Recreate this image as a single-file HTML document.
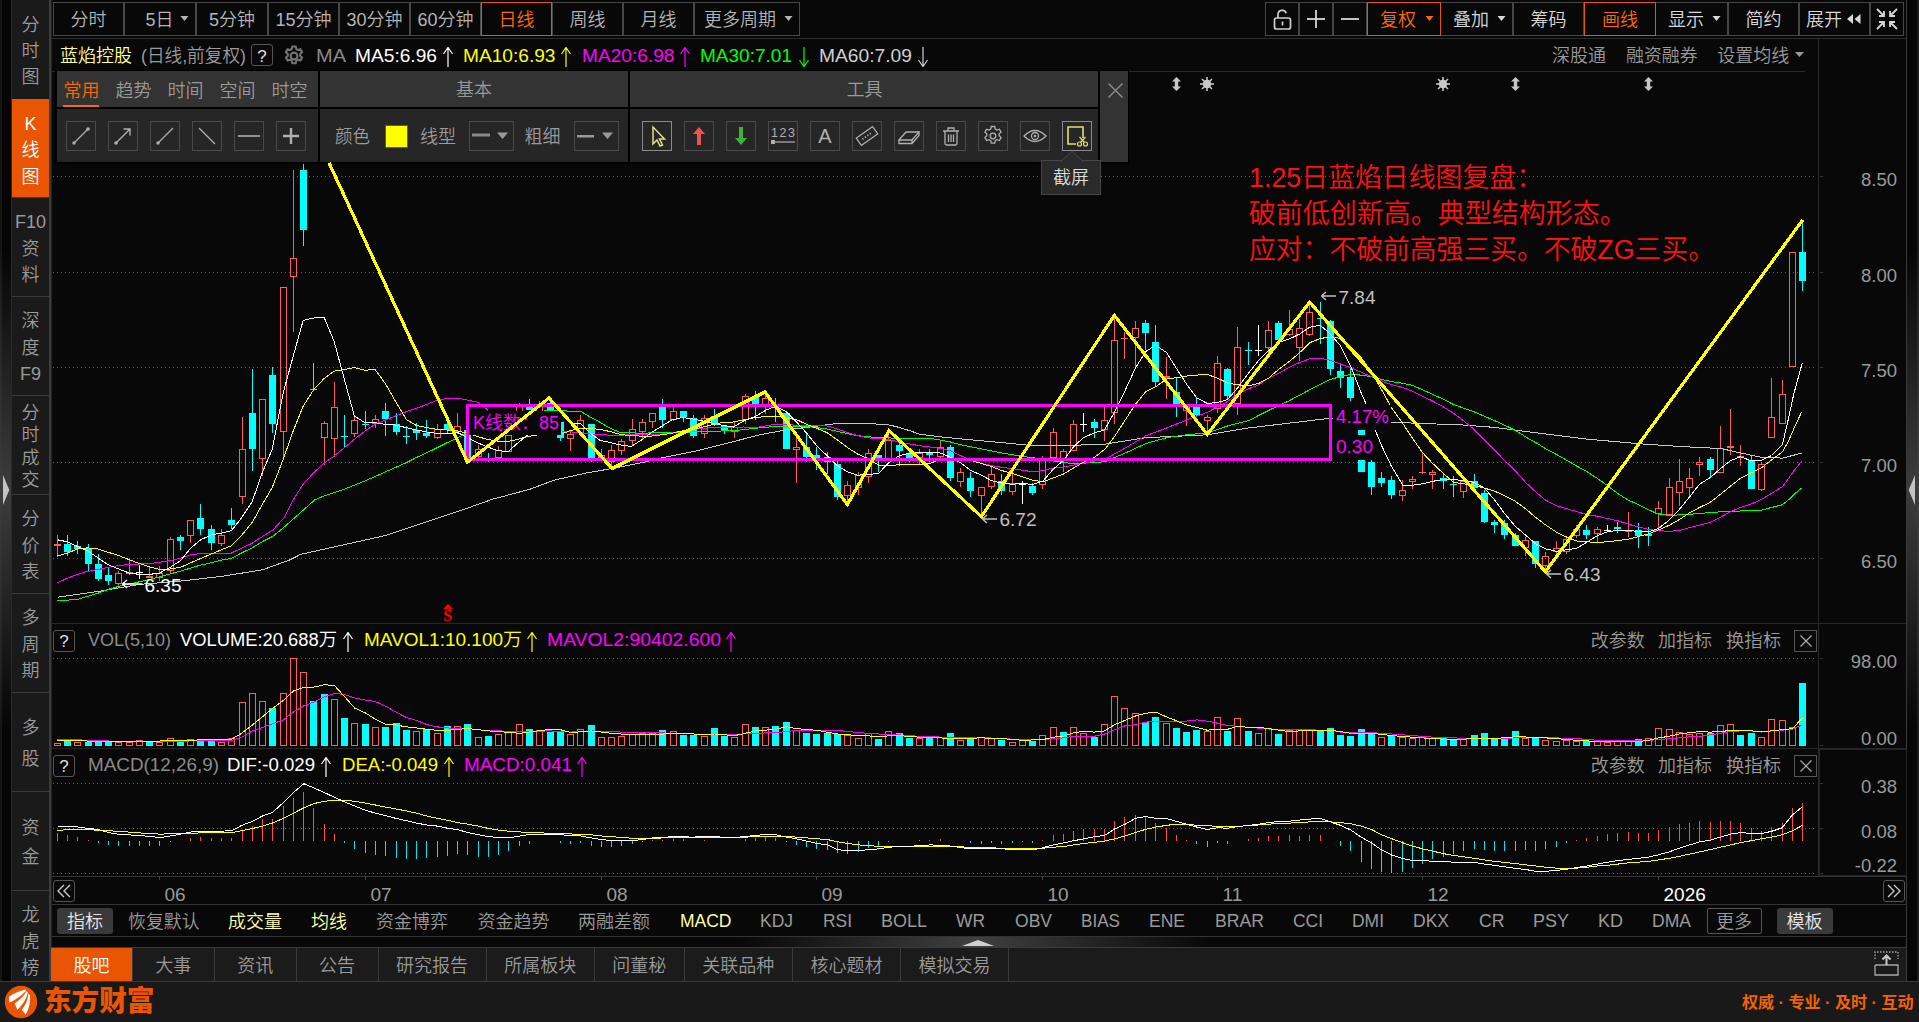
<!DOCTYPE html>
<html lang="zh-CN"><head><meta charset="utf-8"><title>K线图</title><style>html,body{margin:0;padding:0;background:#080808;}
#root{position:relative;width:1919px;height:1022px;overflow:hidden;background:#080808;font-family:"Liberation Sans","Noto Sans CJK SC",sans-serif;font-weight:350;}
.b{position:absolute;display:block;}
.t{position:absolute;white-space:nowrap;}
</style></head><body><div id="root">
<div class="b" style="left:0px;top:0px;width:12px;height:981px;background:#050505;"></div>
<div class="b" style="left:0px;top:0px;width:2px;height:981px;background:#161616;"></div>
<div class="b" style="left:0;top:250px;width:12px;height:480px;background:linear-gradient(to bottom,rgba(70,70,70,0),rgba(70,70,70,.85) 50%,rgba(70,70,70,0));"></div>
<svg class="b" style="left:3px;top:474px" width="8" height="32" viewBox="0 0 8 32"><polygon points="0,1 6.3,16 0,31" fill="#c4c4c4"/></svg>
<div class="b" style="left:12px;top:0px;width:37px;height:981px;background:#1a1a1a;"></div>
<div class="b" style="left:49px;top:0px;width:2px;height:981px;background:#3a3c3e;"></div>
<div class="b" style="left:51px;top:0px;width:1px;height:981px;background:#242424;"></div>
<div class="b" style="left:11px;top:0px;width:1px;height:981px;background:#2a2a2a;"></div>
<div class="b" style="left:12px;top:99px;width:37px;height:98px;background:#ea5504;"></div>
<div class="b" style="left:12px;top:197px;width:37px;height:1px;background:#3a3a3a;"></div>
<div class="b" style="left:12px;top:296px;width:37px;height:1px;background:#3a3a3a;"></div>
<div class="b" style="left:12px;top:395px;width:37px;height:1px;background:#3a3a3a;"></div>
<div class="b" style="left:12px;top:494px;width:37px;height:1px;background:#3a3a3a;"></div>
<div class="b" style="left:12px;top:593px;width:37px;height:1px;background:#3a3a3a;"></div>
<div class="b" style="left:12px;top:692px;width:37px;height:1px;background:#3a3a3a;"></div>
<div class="b" style="left:12px;top:791px;width:37px;height:1px;background:#3a3a3a;"></div>
<div class="b" style="left:12px;top:890px;width:37px;height:1px;background:#3a3a3a;"></div>
<div class="b" style="left:53px;top:2px;width:71px;height:34px;border:1px solid #484848;box-sizing:border-box;"></div>
<div class="b" style="left:124px;top:2px;width:72px;height:34px;border:1px solid #484848;box-sizing:border-box;"></div>
<svg class="b" style="left:179.7px;top:16px" width="9" height="6"><polygon points="0.5,0 8.5,0 4.5,5" fill="#b4b4b4"/></svg>
<div class="b" style="left:196px;top:2px;width:72px;height:34px;border:1px solid #484848;box-sizing:border-box;"></div>
<div class="b" style="left:268px;top:2px;width:71px;height:34px;border:1px solid #484848;box-sizing:border-box;"></div>
<div class="b" style="left:339px;top:2px;width:71px;height:34px;border:1px solid #484848;box-sizing:border-box;"></div>
<div class="b" style="left:410px;top:2px;width:71px;height:34px;border:1px solid #484848;box-sizing:border-box;"></div>
<div class="b" style="left:552px;top:2px;width:71px;height:34px;border:1px solid #484848;box-sizing:border-box;"></div>
<div class="b" style="left:623px;top:2px;width:71px;height:34px;border:1px solid #484848;box-sizing:border-box;"></div>
<div class="b" style="left:694px;top:2px;width:106px;height:34px;border:1px solid #484848;box-sizing:border-box;"></div>
<svg class="b" style="left:783.7px;top:16px" width="9" height="6"><polygon points="0.5,0 8.5,0 4.5,5" fill="#b4b4b4"/></svg>
<div class="b" style="left:481px;top:2px;width:71px;height:34px;border:1px solid #ea5504;box-sizing:border-box;"></div>
<div class="b" style="left:1265px;top:2px;width:34px;height:34px;border:1px solid #464646;box-sizing:border-box;"></div>
<div class="b" style="left:1299px;top:2px;width:34px;height:34px;border:1px solid #464646;box-sizing:border-box;"></div>
<div class="b" style="left:1333px;top:2px;width:34px;height:34px;border:1px solid #464646;box-sizing:border-box;"></div>
<div class="b" style="left:1440px;top:2px;width:73px;height:34px;border:1px solid #464646;box-sizing:border-box;"></div>
<svg class="b" style="left:1496.7px;top:16px" width="9" height="6"><polygon points="0.5,0 8.5,0 4.5,5" fill="#d8d8d8"/></svg>
<div class="b" style="left:1513px;top:2px;width:71px;height:34px;border:1px solid #464646;box-sizing:border-box;"></div>
<div class="b" style="left:1655px;top:2px;width:73px;height:34px;border:1px solid #464646;box-sizing:border-box;"></div>
<svg class="b" style="left:1711.7px;top:16px" width="9" height="6"><polygon points="0.5,0 8.5,0 4.5,5" fill="#d8d8d8"/></svg>
<div class="b" style="left:1728px;top:2px;width:71px;height:34px;border:1px solid #464646;box-sizing:border-box;"></div>
<div class="b" style="left:1799px;top:2px;width:71px;height:34px;border:1px solid #464646;box-sizing:border-box;"></div>
<svg class="b" style="left:1846px;top:13px" width="16" height="12"><polygon points="7,1 7,11 1,6" fill="#d8d8d8"/><polygon points="14.5,1 14.5,11 8.5,6" fill="#d8d8d8"/></svg>
<div class="b" style="left:1870px;top:2px;width:34px;height:34px;border:1px solid #464646;box-sizing:border-box;"></div>
<div class="b" style="left:1367px;top:2px;width:74px;height:34px;border:1px solid #ea5504;box-sizing:border-box;"></div>
<svg class="b" style="left:1424.7px;top:16px" width="9" height="6"><polygon points="0.5,0 8.5,0 4.5,5" fill="#ff6a00"/></svg>
<div class="b" style="left:1584px;top:2px;width:72px;height:34px;border:1px solid #ea5504;box-sizing:border-box;"></div>
<svg class="b" style="left:1270px;top:7px" width="24" height="24" viewBox="0 0 24 24" fill="none" stroke="#d0d0d0" stroke-width="1.7"><rect x="4.5" y="11" width="16" height="11" rx="2"/><path d="M8 11V7.5a4.2 4.2 0 0 1 8.2-1.2"/><line x1="12.5" y1="14.5" x2="12.5" y2="18.5"/></svg>
<svg class="b" style="left:1307px;top:10px" width="18" height="18" stroke="#d8d8d8" stroke-width="1.8"><line x1="0" y1="9" x2="18" y2="9"/><line x1="9" y1="0" x2="9" y2="18"/></svg>
<svg class="b" style="left:1341px;top:10px" width="18" height="18" stroke="#d8d8d8" stroke-width="1.8"><line x1="0" y1="9" x2="18" y2="9"/></svg>
<svg class="b" style="left:1876px;top:8px" width="22" height="22" viewBox="0 0 22 22" fill="none" stroke="#d8d8d8" stroke-width="1.8"><path d="M1 1l7 7M8 3v5H3M21 1l-7 7M14 3v5h5M1 21l7-7M8 19v-5H3M21 21l-7-7M14 19v-5h5"/></svg>
<div class="b" style="left:52px;top:38px;width:1854px;height:1px;background:#2a2a2a;"></div>
<div class="b" style="left:251px;top:44px;width:22px;height:22px;border:1px solid #555;box-sizing:border-box;border-radius:3px;"></div>
<svg class="b" style="left:282px;top:44px" width="24" height="24" viewBox="0 0 24 24" fill="none" stroke="#727272" stroke-width="2.1"><circle cx="12" cy="12" r="3.4"/><path d="M10.3 2.5h3.4l.6 2.6 1.6.9 2.5-.8 1.7 2.9-1.9 1.8v1.9l1.9 1.8-1.7 2.9-2.5-.8-1.6.9-.6 2.6h-3.4l-.6-2.6-1.6-.9-2.5.8-1.7-2.9 1.9-1.8v-1.9L3.9 8.1l1.7-2.9 2.5.8 1.6-.9z"/></svg>
<svg class="b" style="left:443px;top:46.5px" width="10" height="20" fill="none" stroke="#fff" stroke-width="1.2"><path d="M5 0V20M0.5 7L5 0.5L9.5 7"/></svg>
<svg class="b" style="left:561px;top:46.5px" width="10" height="20" fill="none" stroke="#ffff00" stroke-width="1.2"><path d="M5 0V20M0.5 7L5 0.5L9.5 7"/></svg>
<svg class="b" style="left:680px;top:46.5px" width="10" height="20" fill="none" stroke="#ff00ff" stroke-width="1.2"><path d="M5 0V20M0.5 7L5 0.5L9.5 7"/></svg>
<svg class="b" style="left:799px;top:46.5px" width="10" height="20" fill="none" stroke="#00ff00" stroke-width="1.2"><path d="M5 0V20M0.5 13L5 19.5L9.5 13"/></svg>
<svg class="b" style="left:917.7px;top:46.5px" width="10" height="20" fill="none" stroke="#d0d0d0" stroke-width="1.2"><path d="M5 0V20M0.5 13L5 19.5L9.5 13"/></svg>
<svg class="b" style="left:1795px;top:52px" width="9" height="6"><polygon points="0,0 9,0 4.5,5" fill="#999"/></svg>
<div class="b" style="left:52px;top:71px;width:1753px;height:1px;background:#2a2a2a;"></div>
<svg class="b" style="left:0;top:0" width="1919" height="1022" viewBox="0 0 1919 1022"><g stroke="#5a5a5a" stroke-width="1" stroke-dasharray="1 3" shape-rendering="crispEdges"><line x1="53" y1="176.5" x2="1815" y2="176.5"/><line x1="53" y1="272.5" x2="1815" y2="272.5"/><line x1="53" y1="367.5" x2="1815" y2="367.5"/><line x1="53" y1="462.5" x2="1815" y2="462.5"/><line x1="53" y1="558.5" x2="1815" y2="558.5"/><line x1="53" y1="658.5" x2="1815" y2="658.5"/><line x1="53" y1="783.5" x2="1815" y2="783.5"/><line x1="53" y1="828.5" x2="1815" y2="828.5"/><line x1="53" y1="873.5" x2="1815" y2="873.5"/></g>
<g fill="#333" shape-rendering="crispEdges"><rect x="1820" y="176" width="3" height="1"/><rect x="1820" y="272" width="3" height="1"/><rect x="1820" y="367" width="3" height="1"/><rect x="1820" y="462" width="3" height="1"/><rect x="1820" y="558" width="3" height="1"/><rect x="1820" y="658" width="3" height="1"/><rect x="1820" y="745" width="3" height="1"/><rect x="1820" y="783" width="3" height="1"/><rect x="1820" y="828" width="3" height="1"/><rect x="1820" y="873" width="3" height="1"/></g>
<g shape-rendering="crispEdges"><rect x="57" y="535" width="1" height="9" fill="#ff5c5c"/><rect x="57" y="546" width="1" height="11" fill="#ff5c5c"/><rect x="54.5" y="544.5" width="6" height="1" fill="none" stroke="#ff5c5c" stroke-width="1"/><rect x="67" y="535" width="1" height="21" fill="#00ffff"/><rect x="64" y="544" width="7" height="8" fill="#00ffff"/><rect x="77" y="541" width="1" height="13" fill="#00ffff"/><rect x="74" y="546" width="7" height="3" fill="#00ffff"/><rect x="88" y="544" width="1" height="27" fill="#00ffff"/><rect x="85" y="548" width="7" height="16" fill="#00ffff"/><rect x="98" y="554" width="1" height="27" fill="#00ffff"/><rect x="95" y="564" width="7" height="15" fill="#00ffff"/><rect x="108" y="568" width="1" height="17" fill="#00ffff"/><rect x="105" y="575" width="7" height="6" fill="#00ffff"/><rect x="118" y="571" width="1" height="2" fill="#ff5c5c"/><rect x="118" y="584" width="1" height="2" fill="#ff5c5c"/><rect x="115.5" y="573.5" width="6" height="10" fill="none" stroke="#ff5c5c" stroke-width="1"/><rect x="129" y="558" width="1" height="14" fill="#ff5c5c"/><rect x="129" y="574" width="1" height="1" fill="#ff5c5c"/><rect x="126.5" y="572.5" width="6" height="1" fill="none" stroke="#ff5c5c" stroke-width="1"/><rect x="139" y="565" width="1" height="14" fill="#ffffff"/><rect x="136" y="572" width="7" height="1" fill="#ffffff"/><rect x="149" y="566" width="1" height="10" fill="#ff5c5c"/><rect x="146.5" y="576.5" width="6" height="1" fill="none" stroke="#ff5c5c" stroke-width="1"/><rect x="159" y="566" width="1" height="7" fill="#ff5c5c"/><rect x="159" y="578" width="1" height="3" fill="#ff5c5c"/><rect x="156.5" y="573.5" width="6" height="4" fill="none" stroke="#ff5c5c" stroke-width="1"/><rect x="170" y="537" width="1" height="2" fill="#ff5c5c"/><rect x="170" y="571" width="1" height="2" fill="#ff5c5c"/><rect x="167.5" y="539.5" width="6" height="31" fill="none" stroke="#ff5c5c" stroke-width="1"/><rect x="180" y="535" width="1" height="15" fill="#00ffff"/><rect x="177" y="537" width="7" height="4" fill="#00ffff"/><rect x="190" y="536" width="1" height="7" fill="#ff5c5c"/><rect x="187.5" y="520.5" width="6" height="15" fill="none" stroke="#ff5c5c" stroke-width="1"/><rect x="200" y="504" width="1" height="31" fill="#00ffff"/><rect x="197" y="518" width="7" height="11" fill="#00ffff"/><rect x="211" y="525" width="1" height="25" fill="#00ffff"/><rect x="208" y="529" width="7" height="14" fill="#00ffff"/><rect x="221" y="529" width="1" height="6" fill="#ff5c5c"/><rect x="221" y="544" width="1" height="2" fill="#ff5c5c"/><rect x="218.5" y="535.5" width="6" height="8" fill="none" stroke="#ff5c5c" stroke-width="1"/><rect x="231" y="508" width="1" height="21" fill="#00ffff"/><rect x="228" y="520" width="7" height="5" fill="#00ffff"/><rect x="242" y="417" width="1" height="32" fill="#ff5c5c"/><rect x="242" y="497" width="1" height="7" fill="#ff5c5c"/><rect x="239.5" y="449.5" width="6" height="47" fill="none" stroke="#ff5c5c" stroke-width="1"/><rect x="252" y="369" width="1" height="102" fill="#00ffff"/><rect x="249" y="413" width="7" height="36" fill="#00ffff"/><rect x="262" y="459" width="1" height="17" fill="#ff5c5c"/><rect x="259.5" y="399.5" width="6" height="59" fill="none" stroke="#ff5c5c" stroke-width="1"/><rect x="272" y="367" width="1" height="66" fill="#00ffff"/><rect x="269" y="375" width="7" height="49" fill="#00ffff"/><rect x="283" y="432" width="1" height="27" fill="#ff5c5c"/><rect x="280.5" y="287.5" width="6" height="144" fill="none" stroke="#ff5c5c" stroke-width="1"/><rect x="293" y="170" width="1" height="88" fill="#ff5c5c"/><rect x="293" y="277" width="1" height="55" fill="#ff5c5c"/><rect x="290.5" y="258.5" width="6" height="18" fill="none" stroke="#ff5c5c" stroke-width="1"/><rect x="303" y="164" width="1" height="82" fill="#00ffff"/><rect x="300" y="170" width="7" height="60" fill="#00ffff"/><rect x="313" y="363" width="1" height="26" fill="#00ffff"/><rect x="310" y="389" width="7" height="1" fill="#00ffff"/><rect x="324" y="421" width="1" height="2" fill="#ff5c5c"/><rect x="324" y="438" width="1" height="27" fill="#ff5c5c"/><rect x="321.5" y="423.5" width="6" height="14" fill="none" stroke="#ff5c5c" stroke-width="1"/><rect x="334" y="382" width="1" height="25" fill="#ff5c5c"/><rect x="334" y="439" width="1" height="18" fill="#ff5c5c"/><rect x="331.5" y="407.5" width="6" height="31" fill="none" stroke="#ff5c5c" stroke-width="1"/><rect x="344" y="415" width="1" height="32" fill="#00ffff"/><rect x="341" y="436" width="7" height="1" fill="#00ffff"/><rect x="354" y="416" width="1" height="4" fill="#ff5c5c"/><rect x="354" y="434" width="1" height="3" fill="#ff5c5c"/><rect x="351.5" y="420.5" width="6" height="13" fill="none" stroke="#ff5c5c" stroke-width="1"/><rect x="365" y="411" width="1" height="18" fill="#00ffff"/><rect x="362" y="424" width="7" height="1" fill="#00ffff"/><rect x="375" y="415" width="1" height="4" fill="#ff5c5c"/><rect x="375" y="424" width="1" height="4" fill="#ff5c5c"/><rect x="372.5" y="419.5" width="6" height="4" fill="none" stroke="#ff5c5c" stroke-width="1"/><rect x="385" y="403" width="1" height="33" fill="#00ffff"/><rect x="382" y="411" width="7" height="8" fill="#00ffff"/><rect x="396" y="413" width="1" height="22" fill="#00ffff"/><rect x="393" y="424" width="7" height="8" fill="#00ffff"/><rect x="406" y="426" width="1" height="18" fill="#00ffff"/><rect x="403" y="436" width="7" height="1" fill="#00ffff"/><rect x="416" y="423" width="1" height="17" fill="#00ffff"/><rect x="413" y="430" width="7" height="3" fill="#00ffff"/><rect x="426" y="420" width="1" height="18" fill="#00ffff"/><rect x="423" y="433" width="7" height="3" fill="#00ffff"/><rect x="437" y="424" width="1" height="5" fill="#ff5c5c"/><rect x="437" y="438" width="1" height="1" fill="#ff5c5c"/><rect x="434.5" y="429.5" width="6" height="8" fill="none" stroke="#ff5c5c" stroke-width="1"/><rect x="447" y="423" width="1" height="10" fill="#00ffff"/><rect x="444" y="424" width="7" height="6" fill="#00ffff"/><rect x="457" y="413" width="1" height="13" fill="#ff5c5c"/><rect x="457" y="432" width="1" height="2" fill="#ff5c5c"/><rect x="454.5" y="426.5" width="6" height="5" fill="none" stroke="#ff5c5c" stroke-width="1"/><rect x="467" y="429" width="1" height="32" fill="#00ffff"/><rect x="464" y="430" width="7" height="28" fill="#00ffff"/><rect x="478" y="445" width="1" height="4" fill="#ff5c5c"/><rect x="478" y="457" width="1" height="1" fill="#ff5c5c"/><rect x="475.5" y="449.5" width="6" height="7" fill="none" stroke="#ff5c5c" stroke-width="1"/><rect x="488" y="453" width="1" height="9" fill="#00ffff"/><rect x="485" y="458" width="7" height="1" fill="#00ffff"/><rect x="498" y="446" width="1" height="4" fill="#ff5c5c"/><rect x="495.5" y="450.5" width="6" height="7" fill="none" stroke="#ff5c5c" stroke-width="1"/><rect x="508" y="434" width="1" height="1" fill="#ff5c5c"/><rect x="505.5" y="435.5" width="6" height="16" fill="none" stroke="#ff5c5c" stroke-width="1"/><rect x="519" y="403" width="1" height="3" fill="#ff5c5c"/><rect x="516.5" y="406.5" width="6" height="26" fill="none" stroke="#ff5c5c" stroke-width="1"/><rect x="529" y="399" width="1" height="11" fill="#00ffff"/><rect x="526" y="407" width="7" height="3" fill="#00ffff"/><rect x="539" y="401" width="1" height="4" fill="#ff5c5c"/><rect x="539" y="416" width="1" height="4" fill="#ff5c5c"/><rect x="536.5" y="405.5" width="6" height="10" fill="none" stroke="#ff5c5c" stroke-width="1"/><rect x="550" y="400" width="1" height="12" fill="#00ffff"/><rect x="547" y="403" width="7" height="7" fill="#00ffff"/><rect x="560" y="422" width="1" height="19" fill="#00ffff"/><rect x="557" y="422" width="7" height="16" fill="#00ffff"/><rect x="570" y="430" width="1" height="4" fill="#ff5c5c"/><rect x="570" y="439" width="1" height="12" fill="#ff5c5c"/><rect x="567.5" y="434.5" width="6" height="4" fill="none" stroke="#ff5c5c" stroke-width="1"/><rect x="580" y="415" width="1" height="5" fill="#ff5c5c"/><rect x="577.5" y="420.5" width="6" height="12" fill="none" stroke="#ff5c5c" stroke-width="1"/><rect x="591" y="424" width="1" height="38" fill="#00ffff"/><rect x="588" y="424" width="7" height="34" fill="#00ffff"/><rect x="601" y="449" width="1" height="6" fill="#ff5c5c"/><rect x="601" y="458" width="1" height="1" fill="#ff5c5c"/><rect x="598.5" y="455.5" width="6" height="2" fill="none" stroke="#ff5c5c" stroke-width="1"/><rect x="611" y="445" width="1" height="5" fill="#ff5c5c"/><rect x="611" y="462" width="1" height="4" fill="#ff5c5c"/><rect x="608.5" y="450.5" width="6" height="11" fill="none" stroke="#ff5c5c" stroke-width="1"/><rect x="621" y="439" width="1" height="2" fill="#ff5c5c"/><rect x="621" y="451" width="1" height="4" fill="#ff5c5c"/><rect x="618.5" y="441.5" width="6" height="9" fill="none" stroke="#ff5c5c" stroke-width="1"/><rect x="632" y="419" width="1" height="10" fill="#ff5c5c"/><rect x="632" y="441" width="1" height="4" fill="#ff5c5c"/><rect x="629.5" y="429.5" width="6" height="11" fill="none" stroke="#ff5c5c" stroke-width="1"/><rect x="642" y="419" width="1" height="3" fill="#ff5c5c"/><rect x="642" y="432" width="1" height="7" fill="#ff5c5c"/><rect x="639.5" y="422.5" width="6" height="9" fill="none" stroke="#ff5c5c" stroke-width="1"/><rect x="652" y="422" width="1" height="6" fill="#ff5c5c"/><rect x="649.5" y="413.5" width="6" height="8" fill="none" stroke="#ff5c5c" stroke-width="1"/><rect x="662" y="399" width="1" height="29" fill="#00ffff"/><rect x="659" y="407" width="7" height="13" fill="#00ffff"/><rect x="673" y="407" width="1" height="4" fill="#ff5c5c"/><rect x="673" y="420" width="1" height="1" fill="#ff5c5c"/><rect x="670.5" y="411.5" width="6" height="8" fill="none" stroke="#ff5c5c" stroke-width="1"/><rect x="683" y="411" width="1" height="11" fill="#00ffff"/><rect x="680" y="411" width="7" height="6" fill="#00ffff"/><rect x="693" y="415" width="1" height="23" fill="#00ffff"/><rect x="690" y="418" width="7" height="18" fill="#00ffff"/><rect x="704" y="415" width="1" height="3" fill="#ff5c5c"/><rect x="704" y="434" width="1" height="4" fill="#ff5c5c"/><rect x="701.5" y="418.5" width="6" height="15" fill="none" stroke="#ff5c5c" stroke-width="1"/><rect x="714" y="409" width="1" height="17" fill="#00ffff"/><rect x="711" y="416" width="7" height="9" fill="#00ffff"/><rect x="724" y="425" width="1" height="9" fill="#00ffff"/><rect x="721" y="426" width="7" height="4" fill="#00ffff"/><rect x="734" y="422" width="1" height="5" fill="#ff5c5c"/><rect x="734" y="432" width="1" height="6" fill="#ff5c5c"/><rect x="731.5" y="427.5" width="6" height="4" fill="none" stroke="#ff5c5c" stroke-width="1"/><rect x="745" y="394" width="1" height="2" fill="#ff5c5c"/><rect x="745" y="420" width="1" height="4" fill="#ff5c5c"/><rect x="742.5" y="396.5" width="6" height="23" fill="none" stroke="#ff5c5c" stroke-width="1"/><rect x="755" y="391" width="1" height="29" fill="#00ffff"/><rect x="752" y="397" width="7" height="7" fill="#00ffff"/><rect x="765" y="395" width="1" height="3" fill="#ff5c5c"/><rect x="765" y="407" width="1" height="7" fill="#ff5c5c"/><rect x="762.5" y="398.5" width="6" height="8" fill="none" stroke="#ff5c5c" stroke-width="1"/><rect x="775" y="398" width="1" height="24" fill="#00ffff"/><rect x="772" y="406" width="7" height="2" fill="#00ffff"/><rect x="786" y="413" width="1" height="36" fill="#00ffff"/><rect x="783" y="413" width="7" height="36" fill="#00ffff"/><rect x="796" y="437" width="1" height="10" fill="#ff5c5c"/><rect x="796" y="450" width="1" height="33" fill="#ff5c5c"/><rect x="793.5" y="447.5" width="6" height="2" fill="none" stroke="#ff5c5c" stroke-width="1"/><rect x="806" y="434" width="1" height="28" fill="#00ffff"/><rect x="803" y="447" width="7" height="10" fill="#00ffff"/><rect x="816" y="447" width="1" height="23" fill="#00ffff"/><rect x="813" y="455" width="7" height="3" fill="#00ffff"/><rect x="827" y="452" width="1" height="22" fill="#00ffff"/><rect x="824" y="457" width="7" height="5" fill="#00ffff"/><rect x="837" y="461" width="1" height="39" fill="#00ffff"/><rect x="834" y="464" width="7" height="33" fill="#00ffff"/><rect x="847" y="481" width="1" height="4" fill="#ff5c5c"/><rect x="847" y="496" width="1" height="5" fill="#ff5c5c"/><rect x="844.5" y="485.5" width="6" height="10" fill="none" stroke="#ff5c5c" stroke-width="1"/><rect x="858" y="472" width="1" height="3" fill="#ff5c5c"/><rect x="858" y="488" width="1" height="7" fill="#ff5c5c"/><rect x="855.5" y="475.5" width="6" height="12" fill="none" stroke="#ff5c5c" stroke-width="1"/><rect x="868" y="449" width="1" height="4" fill="#ff5c5c"/><rect x="868" y="477" width="1" height="6" fill="#ff5c5c"/><rect x="865.5" y="453.5" width="6" height="23" fill="none" stroke="#ff5c5c" stroke-width="1"/><rect x="878" y="455" width="1" height="17" fill="#00ffff"/><rect x="875" y="455" width="7" height="3" fill="#00ffff"/><rect x="888" y="434" width="1" height="6" fill="#ff5c5c"/><rect x="885.5" y="440.5" width="6" height="18" fill="none" stroke="#ff5c5c" stroke-width="1"/><rect x="899" y="442" width="1" height="24" fill="#00ffff"/><rect x="896" y="445" width="7" height="6" fill="#00ffff"/><rect x="909" y="452" width="1" height="10" fill="#00ffff"/><rect x="906" y="454" width="7" height="4" fill="#00ffff"/><rect x="919" y="449" width="1" height="4" fill="#ff5c5c"/><rect x="919" y="458" width="1" height="6" fill="#ff5c5c"/><rect x="916.5" y="453.5" width="6" height="4" fill="none" stroke="#ff5c5c" stroke-width="1"/><rect x="929" y="449" width="1" height="13" fill="#00ffff"/><rect x="926" y="452" width="7" height="3" fill="#00ffff"/><rect x="940" y="441" width="1" height="6" fill="#ff5c5c"/><rect x="940" y="457" width="1" height="1" fill="#ff5c5c"/><rect x="937.5" y="447.5" width="6" height="9" fill="none" stroke="#ff5c5c" stroke-width="1"/><rect x="950" y="445" width="1" height="36" fill="#00ffff"/><rect x="947" y="447" width="7" height="31" fill="#00ffff"/><rect x="960" y="468" width="1" height="4" fill="#ff5c5c"/><rect x="960" y="482" width="1" height="5" fill="#ff5c5c"/><rect x="957.5" y="472.5" width="6" height="9" fill="none" stroke="#ff5c5c" stroke-width="1"/><rect x="970" y="472" width="1" height="25" fill="#00ffff"/><rect x="967" y="478" width="7" height="13" fill="#00ffff"/><rect x="981" y="496" width="1" height="21" fill="#ff5c5c"/><rect x="978.5" y="487.5" width="6" height="8" fill="none" stroke="#ff5c5c" stroke-width="1"/><rect x="991" y="467" width="1" height="7" fill="#ff5c5c"/><rect x="991" y="487" width="1" height="2" fill="#ff5c5c"/><rect x="988.5" y="474.5" width="6" height="12" fill="none" stroke="#ff5c5c" stroke-width="1"/><rect x="1001" y="474" width="1" height="21" fill="#00ffff"/><rect x="998" y="481" width="7" height="10" fill="#00ffff"/><rect x="1012" y="473" width="1" height="10" fill="#ff5c5c"/><rect x="1012" y="492" width="1" height="3" fill="#ff5c5c"/><rect x="1009.5" y="483.5" width="6" height="8" fill="none" stroke="#ff5c5c" stroke-width="1"/><rect x="1022" y="481" width="1" height="23" fill="#ffffff"/><rect x="1019" y="484" width="7" height="1" fill="#ffffff"/><rect x="1032" y="483" width="1" height="12" fill="#00ffff"/><rect x="1029" y="486" width="7" height="7" fill="#00ffff"/><rect x="1042" y="456" width="1" height="4" fill="#ff5c5c"/><rect x="1042" y="485" width="1" height="4" fill="#ff5c5c"/><rect x="1039.5" y="460.5" width="6" height="24" fill="none" stroke="#ff5c5c" stroke-width="1"/><rect x="1053" y="428" width="1" height="4" fill="#ff5c5c"/><rect x="1053" y="458" width="1" height="2" fill="#ff5c5c"/><rect x="1050.5" y="432.5" width="6" height="25" fill="none" stroke="#ff5c5c" stroke-width="1"/><rect x="1063" y="449" width="1" height="2" fill="#ff5c5c"/><rect x="1063" y="459" width="1" height="13" fill="#ff5c5c"/><rect x="1060.5" y="451.5" width="6" height="7" fill="none" stroke="#ff5c5c" stroke-width="1"/><rect x="1073" y="420" width="1" height="4" fill="#ff5c5c"/><rect x="1070.5" y="424.5" width="6" height="26" fill="none" stroke="#ff5c5c" stroke-width="1"/><rect x="1083" y="413" width="1" height="19" fill="#ffffff"/><rect x="1080" y="424" width="7" height="1" fill="#ffffff"/><rect x="1094" y="419" width="1" height="19" fill="#00ffff"/><rect x="1091" y="422" width="7" height="6" fill="#00ffff"/><rect x="1104" y="407" width="1" height="13" fill="#ff5c5c"/><rect x="1104" y="430" width="1" height="11" fill="#ff5c5c"/><rect x="1101.5" y="420.5" width="6" height="9" fill="none" stroke="#ff5c5c" stroke-width="1"/><rect x="1114" y="315" width="1" height="25" fill="#ff5c5c"/><rect x="1114" y="413" width="1" height="11" fill="#ff5c5c"/><rect x="1111.5" y="340.5" width="6" height="72" fill="none" stroke="#ff5c5c" stroke-width="1"/><rect x="1124" y="332" width="1" height="27" fill="#ff5c5c"/><rect x="1121" y="338" width="7" height="1" fill="#ff5c5c"/><rect x="1135" y="321" width="1" height="7" fill="#ff5c5c"/><rect x="1135" y="338" width="1" height="29" fill="#ff5c5c"/><rect x="1132.5" y="328.5" width="6" height="9" fill="none" stroke="#ff5c5c" stroke-width="1"/><rect x="1145" y="320" width="1" height="30" fill="#00ffff"/><rect x="1142" y="323" width="7" height="10" fill="#00ffff"/><rect x="1155" y="325" width="1" height="61" fill="#00ffff"/><rect x="1152" y="342" width="7" height="40" fill="#00ffff"/><rect x="1166" y="357" width="1" height="19" fill="#ff5c5c"/><rect x="1166" y="378" width="1" height="21" fill="#ff5c5c"/><rect x="1163.5" y="376.5" width="6" height="1" fill="none" stroke="#ff5c5c" stroke-width="1"/><rect x="1176" y="378" width="1" height="39" fill="#00ffff"/><rect x="1173" y="392" width="7" height="12" fill="#00ffff"/><rect x="1186" y="405" width="1" height="2" fill="#ff5c5c"/><rect x="1186" y="411" width="1" height="15" fill="#ff5c5c"/><rect x="1183.5" y="407.5" width="6" height="3" fill="none" stroke="#ff5c5c" stroke-width="1"/><rect x="1196" y="397" width="1" height="20" fill="#00ffff"/><rect x="1193" y="407" width="7" height="8" fill="#00ffff"/><rect x="1207" y="415" width="1" height="2" fill="#ff5c5c"/><rect x="1207" y="421" width="1" height="13" fill="#ff5c5c"/><rect x="1204.5" y="417.5" width="6" height="3" fill="none" stroke="#ff5c5c" stroke-width="1"/><rect x="1217" y="356" width="1" height="7" fill="#ff5c5c"/><rect x="1217" y="409" width="1" height="4" fill="#ff5c5c"/><rect x="1214.5" y="363.5" width="6" height="45" fill="none" stroke="#ff5c5c" stroke-width="1"/><rect x="1227" y="368" width="1" height="32" fill="#00ffff"/><rect x="1224" y="369" width="7" height="27" fill="#00ffff"/><rect x="1237" y="327" width="1" height="20" fill="#ff5c5c"/><rect x="1237" y="404" width="1" height="11" fill="#ff5c5c"/><rect x="1234.5" y="347.5" width="6" height="56" fill="none" stroke="#ff5c5c" stroke-width="1"/><rect x="1248" y="342" width="1" height="23" fill="#00ffff"/><rect x="1245" y="350" width="7" height="1" fill="#00ffff"/><rect x="1258" y="325" width="1" height="31" fill="#ffffff"/><rect x="1255" y="350" width="7" height="1" fill="#ffffff"/><rect x="1268" y="321" width="1" height="9" fill="#ff5c5c"/><rect x="1268" y="348" width="1" height="5" fill="#ff5c5c"/><rect x="1265.5" y="330.5" width="6" height="17" fill="none" stroke="#ff5c5c" stroke-width="1"/><rect x="1278" y="321" width="1" height="19" fill="#00ffff"/><rect x="1275" y="323" width="7" height="17" fill="#00ffff"/><rect x="1289" y="310" width="1" height="19" fill="#ff5c5c"/><rect x="1289" y="335" width="1" height="1" fill="#ff5c5c"/><rect x="1286.5" y="329.5" width="6" height="5" fill="none" stroke="#ff5c5c" stroke-width="1"/><rect x="1299" y="319" width="1" height="9" fill="#ff5c5c"/><rect x="1299" y="348" width="1" height="13" fill="#ff5c5c"/><rect x="1296.5" y="328.5" width="6" height="19" fill="none" stroke="#ff5c5c" stroke-width="1"/><rect x="1309" y="302" width="1" height="10" fill="#ff5c5c"/><rect x="1309" y="335" width="1" height="1" fill="#ff5c5c"/><rect x="1306.5" y="312.5" width="6" height="22" fill="none" stroke="#ff5c5c" stroke-width="1"/><rect x="1320" y="302" width="1" height="42" fill="#00ffff"/><rect x="1317" y="318" width="7" height="1" fill="#00ffff"/><rect x="1330" y="320" width="1" height="55" fill="#00ffff"/><rect x="1327" y="321" width="7" height="48" fill="#00ffff"/><rect x="1340" y="363" width="1" height="25" fill="#00ffff"/><rect x="1337" y="371" width="7" height="7" fill="#00ffff"/><rect x="1350" y="368" width="1" height="33" fill="#00ffff"/><rect x="1347" y="377" width="7" height="21" fill="#00ffff"/><rect x="1361" y="425" width="1" height="47" fill="#00ffff"/><rect x="1358" y="425" width="7" height="47" fill="#00ffff"/><rect x="1371" y="459" width="1" height="36" fill="#00ffff"/><rect x="1368" y="462" width="7" height="25" fill="#00ffff"/><rect x="1381" y="472" width="1" height="15" fill="#00ffff"/><rect x="1378" y="478" width="7" height="5" fill="#00ffff"/><rect x="1391" y="476" width="1" height="23" fill="#00ffff"/><rect x="1388" y="480" width="7" height="15" fill="#00ffff"/><rect x="1402" y="480" width="1" height="10" fill="#ff5c5c"/><rect x="1402" y="496" width="1" height="5" fill="#ff5c5c"/><rect x="1399.5" y="490.5" width="6" height="5" fill="none" stroke="#ff5c5c" stroke-width="1"/><rect x="1412" y="476" width="1" height="3" fill="#ff5c5c"/><rect x="1412" y="482" width="1" height="7" fill="#ff5c5c"/><rect x="1409.5" y="479.5" width="6" height="2" fill="none" stroke="#ff5c5c" stroke-width="1"/><rect x="1422" y="453" width="1" height="21" fill="#ff5c5c"/><rect x="1419" y="472" width="7" height="1" fill="#ff5c5c"/><rect x="1432" y="470" width="1" height="2" fill="#ff5c5c"/><rect x="1432" y="475" width="1" height="14" fill="#ff5c5c"/><rect x="1429.5" y="472.5" width="6" height="2" fill="none" stroke="#ff5c5c" stroke-width="1"/><rect x="1443" y="473" width="1" height="16" fill="#00ffff"/><rect x="1440" y="478" width="7" height="3" fill="#00ffff"/><rect x="1453" y="476" width="1" height="21" fill="#00ffff"/><rect x="1450" y="484" width="7" height="1" fill="#00ffff"/><rect x="1463" y="479" width="1" height="2" fill="#ff5c5c"/><rect x="1463" y="492" width="1" height="6" fill="#ff5c5c"/><rect x="1460.5" y="481.5" width="6" height="10" fill="none" stroke="#ff5c5c" stroke-width="1"/><rect x="1474" y="474" width="1" height="14" fill="#00ffff"/><rect x="1471" y="481" width="7" height="7" fill="#00ffff"/><rect x="1484" y="490" width="1" height="33" fill="#00ffff"/><rect x="1481" y="493" width="7" height="29" fill="#00ffff"/><rect x="1494" y="520" width="1" height="13" fill="#00ffff"/><rect x="1491" y="522" width="7" height="3" fill="#00ffff"/><rect x="1504" y="520" width="1" height="19" fill="#00ffff"/><rect x="1501" y="523" width="7" height="12" fill="#00ffff"/><rect x="1515" y="533" width="1" height="13" fill="#00ffff"/><rect x="1512" y="535" width="7" height="11" fill="#00ffff"/><rect x="1525" y="537" width="1" height="3" fill="#ff5c5c"/><rect x="1525" y="548" width="1" height="8" fill="#ff5c5c"/><rect x="1522.5" y="540.5" width="6" height="7" fill="none" stroke="#ff5c5c" stroke-width="1"/><rect x="1535" y="541" width="1" height="27" fill="#00ffff"/><rect x="1532" y="541" width="7" height="23" fill="#00ffff"/><rect x="1545" y="552" width="1" height="4" fill="#ff5c5c"/><rect x="1545" y="566" width="1" height="6" fill="#ff5c5c"/><rect x="1542.5" y="556.5" width="6" height="9" fill="none" stroke="#ff5c5c" stroke-width="1"/><rect x="1556" y="541" width="1" height="7" fill="#ff5c5c"/><rect x="1556" y="552" width="1" height="2" fill="#ff5c5c"/><rect x="1553.5" y="548.5" width="6" height="3" fill="none" stroke="#ff5c5c" stroke-width="1"/><rect x="1566" y="537" width="1" height="2" fill="#ff5c5c"/><rect x="1566" y="552" width="1" height="2" fill="#ff5c5c"/><rect x="1563.5" y="539.5" width="6" height="12" fill="none" stroke="#ff5c5c" stroke-width="1"/><rect x="1576" y="525" width="1" height="4" fill="#ff5c5c"/><rect x="1576" y="536" width="1" height="2" fill="#ff5c5c"/><rect x="1573.5" y="529.5" width="6" height="6" fill="none" stroke="#ff5c5c" stroke-width="1"/><rect x="1586" y="525" width="1" height="14" fill="#00ffff"/><rect x="1583" y="530" width="7" height="5" fill="#00ffff"/><rect x="1597" y="527" width="1" height="2" fill="#ff5c5c"/><rect x="1597" y="534" width="1" height="8" fill="#ff5c5c"/><rect x="1594.5" y="529.5" width="6" height="4" fill="none" stroke="#ff5c5c" stroke-width="1"/><rect x="1607" y="525" width="1" height="7" fill="#ffffff"/><rect x="1604" y="530" width="7" height="1" fill="#ffffff"/><rect x="1617" y="522" width="1" height="11" fill="#00ffff"/><rect x="1614" y="527" width="7" height="2" fill="#00ffff"/><rect x="1628" y="512" width="1" height="18" fill="#ff5c5c"/><rect x="1628" y="531" width="1" height="6" fill="#ff5c5c"/><rect x="1625.5" y="530.5" width="6" height="1" fill="none" stroke="#ff5c5c" stroke-width="1"/><rect x="1638" y="523" width="1" height="25" fill="#00ffff"/><rect x="1635" y="530" width="7" height="6" fill="#00ffff"/><rect x="1648" y="527" width="1" height="19" fill="#00ffff"/><rect x="1645" y="534" width="7" height="2" fill="#00ffff"/><rect x="1658" y="501" width="1" height="7" fill="#ff5c5c"/><rect x="1658" y="514" width="1" height="17" fill="#ff5c5c"/><rect x="1655.5" y="508.5" width="6" height="5" fill="none" stroke="#ff5c5c" stroke-width="1"/><rect x="1669" y="478" width="1" height="9" fill="#ff5c5c"/><rect x="1666.5" y="487.5" width="6" height="27" fill="none" stroke="#ff5c5c" stroke-width="1"/><rect x="1679" y="459" width="1" height="22" fill="#ff5c5c"/><rect x="1679" y="493" width="1" height="13" fill="#ff5c5c"/><rect x="1676.5" y="481.5" width="6" height="11" fill="none" stroke="#ff5c5c" stroke-width="1"/><rect x="1689" y="468" width="1" height="10" fill="#ff5c5c"/><rect x="1689" y="488" width="1" height="10" fill="#ff5c5c"/><rect x="1686.5" y="478.5" width="6" height="9" fill="none" stroke="#ff5c5c" stroke-width="1"/><rect x="1699" y="457" width="1" height="5" fill="#ff5c5c"/><rect x="1699" y="465" width="1" height="11" fill="#ff5c5c"/><rect x="1696.5" y="462.5" width="6" height="2" fill="none" stroke="#ff5c5c" stroke-width="1"/><rect x="1710" y="457" width="1" height="21" fill="#00ffff"/><rect x="1707" y="459" width="7" height="11" fill="#00ffff"/><rect x="1720" y="426" width="1" height="22" fill="#ff5c5c"/><rect x="1717.5" y="448.5" width="6" height="24" fill="none" stroke="#ff5c5c" stroke-width="1"/><rect x="1730" y="409" width="1" height="37" fill="#ff5c5c"/><rect x="1730" y="448" width="1" height="7" fill="#ff5c5c"/><rect x="1727.5" y="446.5" width="6" height="1" fill="none" stroke="#ff5c5c" stroke-width="1"/><rect x="1740" y="445" width="1" height="11" fill="#ff5c5c"/><rect x="1740" y="458" width="1" height="8" fill="#ff5c5c"/><rect x="1737.5" y="456.5" width="6" height="1" fill="none" stroke="#ff5c5c" stroke-width="1"/><rect x="1751" y="456" width="1" height="33" fill="#00ffff"/><rect x="1748" y="460" width="7" height="29" fill="#00ffff"/><rect x="1761" y="462" width="1" height="2" fill="#ff5c5c"/><rect x="1761" y="490" width="1" height="1" fill="#ff5c5c"/><rect x="1758.5" y="464.5" width="6" height="25" fill="none" stroke="#ff5c5c" stroke-width="1"/><rect x="1771" y="378" width="1" height="39" fill="#ff5c5c"/><rect x="1768.5" y="417.5" width="6" height="20" fill="none" stroke="#ff5c5c" stroke-width="1"/><rect x="1782" y="380" width="1" height="14" fill="#ff5c5c"/><rect x="1779.5" y="394.5" width="6" height="29" fill="none" stroke="#ff5c5c" stroke-width="1"/><rect x="1789.5" y="252.5" width="6" height="114" fill="none" stroke="#ff5c5c" stroke-width="1"/><rect x="1802" y="220" width="1" height="71" fill="#00ffff"/><rect x="1799" y="252" width="7" height="29" fill="#00ffff"/></g>
<polyline points="57.5,597.2 98.3,591.4 139.5,584.4 180.6,581.1 221.4,576.4 262.5,569.8 290.1,559.8 300.5,554.4 385.0,535.6 469.5,507.4 492.7,499.2 530.0,489.2 553.9,480.2 585.3,473.2 616.6,467.7 647.9,461.4 663.5,457.5 694.9,451.2 726.2,443.4 760.0,434.8 765.7,433.7 786.3,429.8 806.4,427.5 827.0,424.8 837.4,423.5 868.2,423.5 888.6,424.8 899.5,427.5 909.4,430.6 919.9,434.2 940.2,436.8 960.6,438.9 981.4,440.8 1001.6,442.6 1022.4,444.7 1032.6,445.5 1042.8,445.8 1063.5,445.6 1104.6,444.2 1145.7,437.7 1207.3,434.8 1248.4,428.0 1289.5,423.1 1330.6,418.2 1390.4,422.1 1422.7,423.5 1463.2,425.0 1494.6,427.4 1525.5,431.5 1556.3,435.3 1586.5,439.1 1607.3,440.9 1638.5,443.7 1669.5,445.8 1699.5,447.6 1720.4,448.4 1740.3,452.9 1761.5,457.3 1782.3,458.1 1801.6,453.2" fill="none" stroke="#c8c8c8" stroke-width="1" shape-rendering="crispEdges"/>
<polyline points="57.5,600.6 67.5,600.1 77.5,599.4 87.4,596.4 98.3,593.1 108.2,589.4 118.6,586.4 129.5,583.9 139.5,581.8 149.5,579.4 159.5,576.8 170.3,573.9 180.6,571.1 190.6,568.1 200.6,565.1 211.4,562.8 221.4,560.1 231.4,558.5 241.3,553.1 252.2,547.8 262.5,541.5 273.0,536.2 283.8,527.4 314.8,499.9 324.1,495.9 334.1,492.6 344.4,489.2 354.4,485.2 365.0,480.9 375.0,476.6 385.3,471.9 395.3,467.6 406.3,462.6 416.2,457.6 426.9,452.7 437.2,447.7 447.2,442.7 457.8,437.7 467.8,432.7 477.2,431.7" fill="none" stroke="#00ff00" stroke-width="1" shape-rendering="crispEdges"/>
<polyline points="544.5,410.5 580.6,411.3 590.0,416.8 600.1,422.3 610.5,428.5 620.6,432.5 631.0,432.9 641.1,433.2 651.5,432.9 661.7,432.5 671.8,432.5 682.2,432.1 692.3,432.0 702.7,431.7 712.9,431.4 723.2,430.9 733.4,430.4 743.5,429.8 755.5,428.2 775.5,426.4 806.4,426.4 816.5,427.5 827.0,429.0 837.4,431.4 847.9,433.7 857.7,435.7 868.2,436.8 878.4,437.6 888.6,437.9 899.5,438.4 909.4,438.4 919.9,438.4 929.6,438.4 940.2,440.0 950.4,442.0 960.6,444.7 970.8,446.7 981.4,448.9 991.6,450.9 1001.6,453.0 1012.3,454.8 1022.4,456.4 1032.6,457.7 1042.8,459.2 1055.7,461.2 1073.7,463.8 1104.6,461.8 1124.5,453.4 1145.7,443.6 1166.6,437.7 1186.4,434.8 1207.3,432.9 1227.5,426.0 1248.4,420.7 1268.6,410.4 1289.5,400.6 1309.7,389.8 1330.3,379.5 1340.5,376.6 1350.8,374.5 1361.1,375.1 1371.4,376.6 1381.6,379.5 1391.3,381.6 1402.8,383.3 1412.5,385.4 1422.7,389.8 1432.4,394.2 1443.3,399.2 1453.5,404.5 1463.2,408.0 1474.1,411.8 1484.4,416.2 1494.6,420.6 1504.3,425.0 1515.2,430.3 1525.5,436.8 1535.7,442.6 1545.4,448.5 1556.3,454.4 1566.6,460.2 1576.8,466.1 1586.5,471.4 1597.3,478.4 1607.3,485.4 1617.5,493.4 1628.4,500.1 1638.5,504.8 1648.4,509.6 1658.4,514.2 1669.5,515.4 1679.5,514.9 1689.6,514.2 1699.5,513.6 1710.4,512.4 1720.4,511.9 1730.3,511.3 1740.3,511.0 1751.4,510.6 1761.5,510.1 1771.5,507.5 1782.3,504.8 1787.9,500.4 1794.1,494.3 1801.6,488.1" fill="none" stroke="#00ff00" stroke-width="1" shape-rendering="crispEdges"/>
<polyline points="57.5,582.8 67.5,578.1 77.5,574.4 87.4,571.4 98.3,569.5 108.2,567.3 118.6,565.6 129.5,564.5 139.5,564.0 149.5,563.5 159.5,562.3 170.3,560.6 180.6,558.1 190.6,554.8 200.6,553.6 211.4,553.6 221.4,553.5 231.4,553.1 241.3,548.2 252.2,543.2 262.5,536.5 273.0,529.9 283.8,518.2 293.2,499.9 303.2,484.2 313.8,472.6 324.1,463.3 334.1,456.0 344.4,447.7 354.4,439.3 365.0,431.0 375.0,424.4 385.3,420.1 395.3,416.1 406.3,411.7 416.2,408.4 426.9,404.4 437.2,400.1 447.2,398.4 457.8,398.1 467.8,400.1 477.8,402.1 488.2,410.5" fill="none" stroke="#ff00ff" stroke-width="1" shape-rendering="crispEdges"/>
<polyline points="561.8,431.4 579.8,432.5 590.0,434.0 600.1,434.8 610.5,435.1 620.6,435.1 631.0,434.8 641.1,434.8 651.5,434.5 661.7,434.0 671.8,432.9 682.2,430.9 692.3,429.3 702.7,428.2 712.9,427.8 723.2,427.8 733.4,427.8 743.5,427.0 755.5,427.5 775.5,424.3 786.3,424.8 806.4,425.4 827.0,425.9 837.4,429.0 847.9,432.6 857.7,435.7 868.2,437.9 878.4,438.4 888.6,439.2 899.5,442.3 909.4,443.9 919.9,445.8 929.6,447.0 940.2,448.3 950.4,450.9 960.6,455.6 970.8,460.3 981.4,463.5 991.6,465.5 1001.6,467.4 1012.3,468.6 1022.4,470.2 1032.6,471.8 1042.8,470.5 1053.3,468.1 1063.5,467.1 1083.4,463.2 1104.6,459.3 1124.5,448.5 1145.7,435.8 1166.6,428.0 1186.4,420.1 1207.3,412.3 1227.5,401.5 1237.7,393.7 1248.4,388.8 1258.6,384.9 1268.6,378.1 1278.7,373.2 1289.5,367.3 1299.7,362.4 1309.7,358.9 1320.2,358.1 1330.3,360.4 1340.5,364.0 1350.8,367.8 1361.1,372.2 1371.4,376.6 1381.6,381.0 1391.3,384.5 1402.8,387.4 1412.5,391.3 1422.7,396.3 1432.4,400.9 1443.3,406.8 1453.5,413.3 1463.2,420.6 1474.1,429.4 1484.4,439.7 1494.6,450.0 1504.3,460.2 1515.2,470.5 1525.5,482.3 1535.7,491.9 1545.4,499.9 1556.3,505.7 1566.6,508.7 1576.8,511.6 1586.5,514.5 1597.3,516.3 1607.3,518.4 1617.5,520.7 1628.4,524.2 1638.5,526.8 1648.4,529.5 1658.4,530.7 1669.5,531.3 1679.5,530.4 1689.6,527.7 1699.5,525.1 1710.4,522.4 1720.4,517.2 1730.3,511.9 1740.3,507.5 1751.4,503.9 1761.5,499.5 1771.5,493.4 1782.3,486.7 1787.9,479.3 1794.1,470.5 1801.6,461.3" fill="none" stroke="#ff00ff" stroke-width="1" shape-rendering="crispEdges"/>
<polyline points="57.5,556.0 67.5,553.1 77.5,549.0 87.4,547.8 98.3,549.0 108.2,552.3 118.6,555.6 129.5,559.8 139.5,563.6 149.5,566.8 159.5,569.5 170.3,569.0 180.6,567.3 190.6,562.8 200.6,558.5 211.4,554.0 221.4,549.8 231.4,545.7 241.3,535.7 252.2,522.4 262.5,504.1 272.2,487.6 283.2,459.3 293.2,431.0 303.2,406.1 313.8,389.5 324.1,378.5 334.1,371.2 344.4,369.5 354.4,367.5 365.0,370.2 375.0,369.5 385.3,383.5 395.3,401.1 406.3,419.4 416.2,425.4 426.9,427.7 437.2,429.4 447.2,430.0 457.8,431.0 467.0,433.2 477.2,436.4 487.6,439.5 497.7,441.1 508.1,441.5 518.2,439.2 528.4,436.4 536.7,435.1" fill="none" stroke="#ffff00" stroke-width="1" shape-rendering="crispEdges"/>
<polyline points="561.8,434.0 569.6,430.9 579.8,428.5 590.0,428.5 600.1,429.3 610.5,431.7 620.6,434.5 631.0,435.6 641.1,436.1 651.5,436.1 661.7,434.8 671.8,433.2 682.2,430.9 692.3,429.8 702.7,427.0 712.9,424.6 723.2,422.3 733.4,422.0 743.5,419.9 755.5,417.6 765.7,416.5 775.5,416.0 786.3,418.1 796.5,419.6 806.4,424.3 816.5,428.2 827.0,432.6 837.4,440.0 847.9,447.8 857.7,454.1 868.2,458.8 878.4,465.0 888.6,465.8 899.5,464.6 909.4,464.2 919.9,464.2 929.6,463.5 940.2,459.5 950.4,458.0 960.6,458.0 970.8,460.3 981.4,463.5 991.6,466.6 1001.6,470.5 1012.3,473.3 1022.4,476.8 1032.6,480.2 1042.8,481.8 1053.3,477.9 1063.5,474.0 1083.4,462.2 1094.4,457.3 1104.6,449.5 1114.4,436.8 1124.5,421.1 1135.3,404.5 1145.7,391.8 1155.5,386.9 1166.6,379.0 1176.4,377.7 1186.4,376.1 1196.6,375.1 1207.3,374.5 1217.5,378.1 1227.5,383.0 1237.7,384.9 1248.4,385.9 1258.6,383.5 1268.6,378.1 1278.7,369.3 1289.5,361.4 1299.7,352.6 1309.7,342.8 1320.2,338.5 1330.3,337.0 1340.5,338.4 1350.8,347.2 1361.1,357.5 1371.4,372.2 1381.6,389.8 1391.3,407.4 1402.8,423.5 1412.5,438.2 1422.7,452.9 1432.4,463.2 1443.3,473.4 1453.5,482.3 1463.2,483.7 1474.1,485.2 1484.4,488.1 1494.6,491.1 1504.3,495.5 1515.2,501.3 1525.5,508.7 1535.7,517.5 1545.4,524.8 1556.3,532.1 1566.6,537.1 1576.8,541.0 1586.5,541.8 1597.3,542.4 1607.3,541.8 1617.5,540.6 1628.4,539.2 1638.5,536.5 1648.4,533.9 1658.4,530.0 1669.5,525.1 1679.5,519.5 1689.6,512.8 1699.5,507.5 1710.4,502.2 1720.4,494.3 1730.3,486.3 1740.3,478.4 1751.4,472.6 1761.5,467.8 1771.5,459.9 1782.3,452.0 1787.9,442.3 1794.1,428.2 1801.6,412.0" fill="none" stroke="#ffff00" stroke-width="1" shape-rendering="crispEdges"/>
<polyline points="57.5,539.8 67.5,541.8 77.5,546.5 87.4,550.6 98.3,558.1 108.2,564.8 118.6,569.0 129.5,573.1 139.5,574.4 149.5,574.4 159.5,573.1 170.3,567.3 180.6,560.6 190.6,548.2 200.6,539.8 211.4,534.8 221.4,533.2 231.4,530.7 241.3,518.2 252.2,501.6 262.3,472.6 272.2,449.3 283.2,392.8 293.2,356.2 303.2,320.3 313.8,318.0 324.1,317.3 334.1,341.2 344.4,379.5 354.4,416.1 365.0,422.7 375.0,422.7 385.3,424.4 395.3,425.0 406.3,427.7 416.2,430.0 426.9,432.0 437.2,433.4 447.2,433.4 457.8,432.7 467.0,437.1 477.2,442.6 487.6,447.0 497.7,450.5 508.1,451.7 518.2,442.6 527.3,435.1" fill="none" stroke="#ffffff" stroke-width="1" shape-rendering="crispEdges"/>
<polyline points="572.7,423.5 580.6,423.5 590.0,433.2 600.1,440.3 610.5,442.6 620.6,445.0 631.0,446.5 641.1,440.3 651.5,432.5 661.7,426.2 671.8,419.9 682.2,417.6 692.3,418.8 702.7,421.0 712.9,423.1 723.2,425.4 733.4,427.0 743.5,421.0 755.5,416.5 765.7,410.2 775.5,406.3 786.3,411.8 796.5,422.0 806.4,432.9 816.5,445.5 827.0,455.6 837.4,465.8 847.9,472.1 857.7,475.2 868.2,474.4 878.4,473.6 888.6,462.7 899.5,455.6 909.4,453.3 919.9,452.5 929.6,452.5 940.2,453.0 950.4,457.2 960.6,462.7 970.8,470.5 981.4,475.2 991.6,480.7 1001.6,483.0 1012.3,484.3 1022.4,483.3 1032.6,484.6 1042.8,481.2 1053.3,469.1 1063.5,460.3 1073.7,446.6 1083.4,437.7 1094.4,432.9 1104.6,429.9 1114.4,412.3 1124.5,391.8 1135.3,368.3 1145.7,351.6 1155.5,345.2 1166.6,352.6 1176.4,368.3 1186.4,383.9 1196.6,397.6 1207.3,403.5 1217.5,402.5 1227.5,399.6 1237.7,387.8 1248.4,373.2 1258.6,360.5 1268.6,350.7 1278.7,342.4 1289.5,338.9 1299.7,334.0 1309.7,327.2 1320.2,325.2 1330.3,334.0 1340.5,345.8 1350.8,366.3 1361.1,392.7 1366.4,404.5" fill="none" stroke="#ffffff" stroke-width="1" shape-rendering="crispEdges"/>
<polyline points="1374.3,428.0 1381.6,445.6 1391.3,466.1 1402.8,485.2 1412.5,485.2 1422.7,483.7 1432.4,481.4 1443.3,479.3 1453.5,479.3 1463.2,480.8 1474.1,482.3 1484.4,488.1 1494.6,499.9 1504.3,513.1 1515.2,526.3 1525.5,535.1 1535.7,543.9 1545.4,548.9 1556.3,551.2 1566.6,549.8 1576.8,548.3 1586.5,542.4 1597.3,535.7 1607.3,531.8 1617.5,530.4 1628.4,530.7 1638.5,531.3 1648.4,531.8 1658.4,528.6 1669.5,519.8 1679.5,509.2 1689.6,496.9 1699.5,484.2 1710.4,477.5 1720.4,468.7 1730.3,460.8 1740.3,456.7 1751.4,460.8 1761.5,460.3 1771.5,455.5 1782.3,444.9 1787.9,421.1 1793.7,394.4 1802.2,363.1" fill="none" stroke="#ffffff" stroke-width="1" shape-rendering="crispEdges"/>
<g shape-rendering="crispEdges"><rect x="54.5" y="743.5" width="6" height="2" fill="none" stroke="#ff5c5c"/><rect x="64" y="741" width="7" height="5" fill="#00ffff"/><rect x="74.5" y="742.5" width="6" height="3" fill="none" stroke="#ff5c5c"/><rect x="85" y="742" width="7" height="4" fill="#00ffff"/><rect x="95" y="740" width="7" height="6" fill="#00ffff"/><rect x="105" y="741" width="7" height="5" fill="#00ffff"/><rect x="115.5" y="742.5" width="6" height="3" fill="none" stroke="#ff5c5c"/><rect x="126.5" y="742.5" width="6" height="3" fill="none" stroke="#ff5c5c"/><rect x="136.5" y="740.5" width="6" height="5" fill="none" stroke="#ff5c5c"/><rect x="146" y="742" width="7" height="4" fill="#00ffff"/><rect x="156.5" y="742.5" width="6" height="3" fill="none" stroke="#ff5c5c"/><rect x="167.5" y="738.5" width="6" height="7" fill="none" stroke="#ff5c5c"/><rect x="177" y="741" width="7" height="5" fill="#00ffff"/><rect x="187.5" y="739.5" width="6" height="6" fill="none" stroke="#ff5c5c"/><rect x="197" y="739" width="7" height="7" fill="#00ffff"/><rect x="208" y="740" width="7" height="6" fill="#00ffff"/><rect x="218.5" y="742.5" width="6" height="3" fill="none" stroke="#ff5c5c"/><rect x="228.5" y="738.5" width="6" height="7" fill="none" stroke="#ff5c5c"/><rect x="239.5" y="702.5" width="6" height="43" fill="none" stroke="#ff5c5c"/><rect x="249.5" y="693.5" width="6" height="52" fill="none" stroke="#ff5c5c"/><rect x="259.5" y="701.5" width="6" height="44" fill="none" stroke="#ff5c5c"/><rect x="269" y="708" width="7" height="38" fill="#00ffff"/><rect x="280.5" y="693.5" width="6" height="52" fill="none" stroke="#ff5c5c"/><rect x="290.5" y="658.5" width="6" height="87" fill="none" stroke="#ff5c5c"/><rect x="300.5" y="672.5" width="6" height="73" fill="none" stroke="#ff5c5c"/><rect x="310" y="701" width="7" height="45" fill="#00ffff"/><rect x="321" y="694" width="7" height="52" fill="#00ffff"/><rect x="331.5" y="699.5" width="6" height="46" fill="none" stroke="#ff5c5c"/><rect x="341" y="718" width="7" height="28" fill="#00ffff"/><rect x="351.5" y="723.5" width="6" height="22" fill="none" stroke="#ff5c5c"/><rect x="362" y="724" width="7" height="22" fill="#00ffff"/><rect x="372.5" y="727.5" width="6" height="18" fill="none" stroke="#ff5c5c"/><rect x="382" y="727" width="7" height="19" fill="#00ffff"/><rect x="393" y="723" width="7" height="23" fill="#00ffff"/><rect x="403" y="730" width="7" height="16" fill="#00ffff"/><rect x="413.5" y="731.5" width="6" height="14" fill="none" stroke="#ff5c5c"/><rect x="423" y="729" width="7" height="17" fill="#00ffff"/><rect x="434.5" y="733.5" width="6" height="12" fill="none" stroke="#ff5c5c"/><rect x="444" y="726" width="7" height="20" fill="#00ffff"/><rect x="454.5" y="726.5" width="6" height="19" fill="none" stroke="#ff5c5c"/><rect x="464" y="724" width="7" height="22" fill="#00ffff"/><rect x="475.5" y="737.5" width="6" height="8" fill="none" stroke="#ff5c5c"/><rect x="485" y="736" width="7" height="10" fill="#00ffff"/><rect x="495.5" y="734.5" width="6" height="11" fill="none" stroke="#ff5c5c"/><rect x="505.5" y="731.5" width="6" height="14" fill="none" stroke="#ff5c5c"/><rect x="516.5" y="724.5" width="6" height="21" fill="none" stroke="#ff5c5c"/><rect x="526" y="729" width="7" height="17" fill="#00ffff"/><rect x="536.5" y="730.5" width="6" height="15" fill="none" stroke="#ff5c5c"/><rect x="547" y="732" width="7" height="14" fill="#00ffff"/><rect x="557" y="731" width="7" height="15" fill="#00ffff"/><rect x="567.5" y="734.5" width="6" height="11" fill="none" stroke="#ff5c5c"/><rect x="577.5" y="729.5" width="6" height="16" fill="none" stroke="#ff5c5c"/><rect x="588" y="725" width="7" height="21" fill="#00ffff"/><rect x="598.5" y="737.5" width="6" height="8" fill="none" stroke="#ff5c5c"/><rect x="608.5" y="737.5" width="6" height="8" fill="none" stroke="#ff5c5c"/><rect x="618.5" y="736.5" width="6" height="9" fill="none" stroke="#ff5c5c"/><rect x="629.5" y="734.5" width="6" height="11" fill="none" stroke="#ff5c5c"/><rect x="639.5" y="733.5" width="6" height="12" fill="none" stroke="#ff5c5c"/><rect x="649.5" y="733.5" width="6" height="12" fill="none" stroke="#ff5c5c"/><rect x="659" y="730" width="7" height="16" fill="#00ffff"/><rect x="670.5" y="731.5" width="6" height="14" fill="none" stroke="#ff5c5c"/><rect x="680" y="735" width="7" height="11" fill="#00ffff"/><rect x="690" y="735" width="7" height="11" fill="#00ffff"/><rect x="701.5" y="736.5" width="6" height="9" fill="none" stroke="#ff5c5c"/><rect x="711" y="728" width="7" height="18" fill="#00ffff"/><rect x="721" y="736" width="7" height="10" fill="#00ffff"/><rect x="731.5" y="737.5" width="6" height="8" fill="none" stroke="#ff5c5c"/><rect x="742.5" y="724.5" width="6" height="21" fill="none" stroke="#ff5c5c"/><rect x="752" y="727" width="7" height="19" fill="#00ffff"/><rect x="762.5" y="727.5" width="6" height="18" fill="none" stroke="#ff5c5c"/><rect x="772" y="726" width="7" height="20" fill="#00ffff"/><rect x="783" y="722" width="7" height="24" fill="#00ffff"/><rect x="793.5" y="730.5" width="6" height="15" fill="none" stroke="#ff5c5c"/><rect x="803" y="733" width="7" height="13" fill="#00ffff"/><rect x="813" y="734" width="7" height="12" fill="#00ffff"/><rect x="824" y="733" width="7" height="13" fill="#00ffff"/><rect x="834" y="734" width="7" height="12" fill="#00ffff"/><rect x="844.5" y="735.5" width="6" height="10" fill="none" stroke="#ff5c5c"/><rect x="855.5" y="738.5" width="6" height="7" fill="none" stroke="#ff5c5c"/><rect x="865.5" y="733.5" width="6" height="12" fill="none" stroke="#ff5c5c"/><rect x="875" y="739" width="7" height="7" fill="#00ffff"/><rect x="885.5" y="731.5" width="6" height="14" fill="none" stroke="#ff5c5c"/><rect x="896" y="733" width="7" height="13" fill="#00ffff"/><rect x="906" y="738" width="7" height="8" fill="#00ffff"/><rect x="916.5" y="738.5" width="6" height="7" fill="none" stroke="#ff5c5c"/><rect x="926" y="738" width="7" height="8" fill="#00ffff"/><rect x="937.5" y="737.5" width="6" height="8" fill="none" stroke="#ff5c5c"/><rect x="947" y="733" width="7" height="13" fill="#00ffff"/><rect x="957.5" y="740.5" width="6" height="5" fill="none" stroke="#ff5c5c"/><rect x="967" y="739" width="7" height="7" fill="#00ffff"/><rect x="978.5" y="737.5" width="6" height="8" fill="none" stroke="#ff5c5c"/><rect x="988.5" y="738.5" width="6" height="7" fill="none" stroke="#ff5c5c"/><rect x="998" y="740" width="7" height="6" fill="#00ffff"/><rect x="1009.5" y="742.5" width="6" height="3" fill="none" stroke="#ff5c5c"/><rect x="1019.5" y="740.5" width="6" height="5" fill="none" stroke="#ff5c5c"/><rect x="1029" y="741" width="7" height="5" fill="#00ffff"/><rect x="1039.5" y="735.5" width="6" height="10" fill="none" stroke="#ff5c5c"/><rect x="1050.5" y="727.5" width="6" height="18" fill="none" stroke="#ff5c5c"/><rect x="1060" y="732" width="7" height="14" fill="#00ffff"/><rect x="1070.5" y="727.5" width="6" height="18" fill="none" stroke="#ff5c5c"/><rect x="1080.5" y="733.5" width="6" height="12" fill="none" stroke="#ff5c5c"/><rect x="1091" y="737" width="7" height="9" fill="#00ffff"/><rect x="1101.5" y="724.5" width="6" height="21" fill="none" stroke="#ff5c5c"/><rect x="1111.5" y="696.5" width="6" height="49" fill="none" stroke="#ff5c5c"/><rect x="1121.5" y="708.5" width="6" height="37" fill="none" stroke="#ff5c5c"/><rect x="1132.5" y="713.5" width="6" height="32" fill="none" stroke="#ff5c5c"/><rect x="1142" y="722" width="7" height="24" fill="#00ffff"/><rect x="1152" y="717" width="7" height="29" fill="#00ffff"/><rect x="1163.5" y="723.5" width="6" height="22" fill="none" stroke="#ff5c5c"/><rect x="1173" y="728" width="7" height="18" fill="#00ffff"/><rect x="1183" y="732" width="7" height="14" fill="#00ffff"/><rect x="1193" y="730" width="7" height="16" fill="#00ffff"/><rect x="1204.5" y="731.5" width="6" height="14" fill="none" stroke="#ff5c5c"/><rect x="1214.5" y="717.5" width="6" height="28" fill="none" stroke="#ff5c5c"/><rect x="1224" y="731" width="7" height="15" fill="#00ffff"/><rect x="1234.5" y="718.5" width="6" height="27" fill="none" stroke="#ff5c5c"/><rect x="1245" y="731" width="7" height="15" fill="#00ffff"/><rect x="1255.5" y="733.5" width="6" height="12" fill="none" stroke="#ff5c5c"/><rect x="1265.5" y="728.5" width="6" height="17" fill="none" stroke="#ff5c5c"/><rect x="1275" y="734" width="7" height="12" fill="#00ffff"/><rect x="1286.5" y="730.5" width="6" height="15" fill="none" stroke="#ff5c5c"/><rect x="1296.5" y="729.5" width="6" height="16" fill="none" stroke="#ff5c5c"/><rect x="1306.5" y="729.5" width="6" height="16" fill="none" stroke="#ff5c5c"/><rect x="1317" y="730" width="7" height="16" fill="#00ffff"/><rect x="1327" y="728" width="7" height="18" fill="#00ffff"/><rect x="1337" y="735" width="7" height="11" fill="#00ffff"/><rect x="1347" y="736" width="7" height="10" fill="#00ffff"/><rect x="1358" y="729" width="7" height="17" fill="#00ffff"/><rect x="1368" y="733" width="7" height="13" fill="#00ffff"/><rect x="1378.5" y="737.5" width="6" height="8" fill="none" stroke="#ff5c5c"/><rect x="1388" y="735" width="7" height="11" fill="#00ffff"/><rect x="1399.5" y="737.5" width="6" height="8" fill="none" stroke="#ff5c5c"/><rect x="1409.5" y="738.5" width="6" height="7" fill="none" stroke="#ff5c5c"/><rect x="1419.5" y="737.5" width="6" height="8" fill="none" stroke="#ff5c5c"/><rect x="1429.5" y="738.5" width="6" height="7" fill="none" stroke="#ff5c5c"/><rect x="1440" y="738" width="7" height="8" fill="#00ffff"/><rect x="1450" y="739" width="7" height="7" fill="#00ffff"/><rect x="1460.5" y="739.5" width="6" height="6" fill="none" stroke="#ff5c5c"/><rect x="1471" y="735" width="7" height="11" fill="#00ffff"/><rect x="1481" y="733" width="7" height="13" fill="#00ffff"/><rect x="1491" y="738" width="7" height="8" fill="#00ffff"/><rect x="1501" y="737" width="7" height="9" fill="#00ffff"/><rect x="1512" y="731" width="7" height="15" fill="#00ffff"/><rect x="1522.5" y="738.5" width="6" height="7" fill="none" stroke="#ff5c5c"/><rect x="1532" y="737" width="7" height="9" fill="#00ffff"/><rect x="1542.5" y="740.5" width="6" height="5" fill="none" stroke="#ff5c5c"/><rect x="1553.5" y="741.5" width="6" height="4" fill="none" stroke="#ff5c5c"/><rect x="1563.5" y="740.5" width="6" height="5" fill="none" stroke="#ff5c5c"/><rect x="1573.5" y="741.5" width="6" height="4" fill="none" stroke="#ff5c5c"/><rect x="1583" y="741" width="7" height="5" fill="#00ffff"/><rect x="1594.5" y="741.5" width="6" height="4" fill="none" stroke="#ff5c5c"/><rect x="1604.5" y="742.5" width="6" height="3" fill="none" stroke="#ff5c5c"/><rect x="1614.5" y="741.5" width="6" height="4" fill="none" stroke="#ff5c5c"/><rect x="1625.5" y="741.5" width="6" height="4" fill="none" stroke="#ff5c5c"/><rect x="1635" y="739" width="7" height="7" fill="#00ffff"/><rect x="1645.5" y="738.5" width="6" height="7" fill="none" stroke="#ff5c5c"/><rect x="1655.5" y="728.5" width="6" height="17" fill="none" stroke="#ff5c5c"/><rect x="1666.5" y="729.5" width="6" height="16" fill="none" stroke="#ff5c5c"/><rect x="1676.5" y="732.5" width="6" height="13" fill="none" stroke="#ff5c5c"/><rect x="1686.5" y="734.5" width="6" height="11" fill="none" stroke="#ff5c5c"/><rect x="1696.5" y="733.5" width="6" height="12" fill="none" stroke="#ff5c5c"/><rect x="1707" y="733" width="7" height="13" fill="#00ffff"/><rect x="1717.5" y="725.5" width="6" height="20" fill="none" stroke="#ff5c5c"/><rect x="1727.5" y="724.5" width="6" height="21" fill="none" stroke="#ff5c5c"/><rect x="1737" y="735" width="7" height="11" fill="#00ffff"/><rect x="1748" y="733" width="7" height="13" fill="#00ffff"/><rect x="1758.5" y="737.5" width="6" height="8" fill="none" stroke="#ff5c5c"/><rect x="1768.5" y="719.5" width="6" height="26" fill="none" stroke="#ff5c5c"/><rect x="1779.5" y="720.5" width="6" height="25" fill="none" stroke="#ff5c5c"/><rect x="1789.5" y="727.5" width="6" height="18" fill="none" stroke="#ff5c5c"/><rect x="1799" y="683" width="7" height="63" fill="#00ffff"/></g>
<polyline points="57.5,739.1 108.6,741.0 160.2,741.9 211.8,740.3 231.8,740.3 241.6,737.2 252.4,730.9 262.5,727.4 272.3,723.9 283.3,719.9 293.4,712.1 303.8,705.8 313.8,702.1 324.4,696.9 334.5,693.4 344.8,694.6 354.9,698.1 365.4,700.0 375.5,701.6 385.8,706.3 395.9,712.1 406.5,717.5 416.6,720.4 426.9,724.6 437.4,726.9 447.5,727.9 457.6,728.6 467.9,728.6 478.5,729.7 488.6,730.9 498.9,730.9 519.3,731.6 550.3,730.9 570.7,732.1 591.3,730.9 611.7,731.6 632.4,732.6 652.8,732.6 673.4,733.3 693.8,734.0 714.4,734.0 734.8,734.4 755.5,733.3 776.1,732.6 796.5,730.4 817.2,730.4 837.6,730.4 858.2,732.6 878.6,734.0 899.2,734.9 919.6,736.3 930.0,736.3 950.6,737.9 981.4,737.5 1001.8,738.6 1022.4,739.6 1043.0,739.6 1053.1,738.6 1063.4,737.9 1073.8,736.3 1084.1,736.3 1094.2,736.3 1104.5,734.0 1114.8,729.7 1125.1,725.8 1135.2,724.6 1145.5,722.2 1155.8,721.1 1166.2,721.1 1176.5,721.1 1186.6,721.1 1196.9,719.9 1207.2,721.1 1217.5,723.2 1227.6,725.5 1237.9,726.2 1248.2,727.4 1258.6,728.1 1268.6,729.0 1279.0,729.7 1289.3,729.7 1299.6,729.7 1309.7,729.7 1320.0,730.2 1330.3,730.2 1340.6,732.1 1351.0,732.6 1361.1,732.6 1371.4,732.6 1381.7,733.3 1392.0,734.0 1412.4,735.6 1433.1,737.2 1453.5,737.9 1474.1,738.6 1494.5,738.6 1515.2,737.9 1535.6,737.9 1556.2,737.9 1576.6,738.6 1597.3,740.3 1617.7,740.3 1638.3,740.3 1648.6,740.3 1658.9,739.6 1669.0,738.6 1679.3,737.9 1689.7,736.8 1700.0,736.3 1710.1,734.9 1720.4,733.3 1730.7,731.6 1741.0,730.9 1751.3,730.9 1761.4,732.1 1771.7,730.9 1782.1,730.2 1792.4,729.3 1802.5,724.6" fill="none" stroke="#ff00ff" stroke-width="1" shape-rendering="crispEdges"/>
<polyline points="57.5,740.3 108.6,741.5 160.2,741.0 211.8,739.6 231.8,739.1 241.6,733.3 252.4,725.0 262.5,716.8 272.3,708.6 283.3,700.4 293.4,691.0 303.8,687.5 313.8,687.1 324.4,684.7 334.5,685.6 344.8,696.9 354.9,708.2 365.4,712.9 375.5,719.2 385.8,724.3 395.9,725.0 406.5,726.9 416.6,727.9 426.9,729.3 437.4,730.4 447.5,730.4 457.6,729.3 467.9,728.6 478.5,729.7 488.6,730.9 498.9,731.6 519.3,733.3 550.3,729.3 560.4,729.7 570.7,732.6 591.3,730.9 611.7,733.3 632.4,734.9 652.8,734.9 673.4,733.3 693.8,734.0 714.4,734.0 734.8,735.6 745.2,733.3 755.5,730.9 776.1,729.3 786.2,726.7 796.5,728.6 817.2,730.4 837.6,734.0 858.2,735.6 878.6,736.3 899.2,735.6 919.6,737.2 930.0,737.2 950.6,738.6 981.4,737.9 1001.8,738.6 1022.4,740.3 1043.0,739.6 1053.1,737.2 1063.4,736.3 1073.8,732.6 1084.1,731.4 1094.2,732.1 1104.5,730.9 1114.8,724.6 1125.1,720.4 1135.2,716.1 1145.5,713.3 1155.8,712.1 1166.2,716.8 1176.5,720.8 1186.6,725.0 1196.9,727.4 1207.2,730.2 1217.5,729.3 1227.6,729.3 1237.9,726.2 1248.2,727.4 1258.6,727.4 1268.6,728.6 1279.0,730.2 1289.3,731.6 1299.6,730.9 1309.7,730.9 1320.0,730.9 1330.3,730.2 1340.6,731.6 1351.0,733.3 1361.1,733.3 1371.4,733.3 1381.7,734.4 1392.0,735.6 1412.4,737.2 1433.1,738.6 1453.5,739.6 1474.1,738.6 1494.5,738.6 1515.2,736.8 1535.6,737.2 1556.2,738.6 1576.6,740.3 1597.3,741.5 1617.7,741.5 1638.3,741.5 1648.6,740.3 1658.9,737.9 1669.0,736.3 1679.3,734.0 1689.7,732.6 1700.0,731.6 1710.1,732.1 1720.4,731.6 1730.7,730.4 1741.0,730.9 1751.3,730.9 1761.4,731.6 1771.7,730.9 1782.1,729.7 1792.4,728.6 1802.5,718.0" fill="none" stroke="#ffff00" stroke-width="1" shape-rendering="crispEdges"/>
<g shape-rendering="crispEdges"><rect x="57" y="833" width="1" height="8" fill="#ff4a4a"/><rect x="67" y="835" width="1" height="6" fill="#ff4a4a"/><rect x="77" y="837" width="1" height="4" fill="#ff4a4a"/><rect x="88" y="840" width="1" height="1" fill="#ff4a4a"/><rect x="98" y="841" width="1" height="2" fill="#00e5ee"/><rect x="108" y="841" width="1" height="4" fill="#00e5ee"/><rect x="118" y="841" width="1" height="5" fill="#00e5ee"/><rect x="129" y="841" width="1" height="5" fill="#00e5ee"/><rect x="139" y="841" width="1" height="5" fill="#00e5ee"/><rect x="149" y="841" width="1" height="5" fill="#00e5ee"/><rect x="159" y="841" width="1" height="5" fill="#00e5ee"/><rect x="170" y="841" width="1" height="1" fill="#00e5ee"/><rect x="190" y="838" width="1" height="3" fill="#ff4a4a"/><rect x="200" y="837" width="1" height="4" fill="#ff4a4a"/><rect x="211" y="838" width="1" height="3" fill="#ff4a4a"/><rect x="221" y="838" width="1" height="3" fill="#ff4a4a"/><rect x="231" y="838" width="1" height="3" fill="#ff4a4a"/><rect x="242" y="831" width="1" height="10" fill="#ff4a4a"/><rect x="252" y="826" width="1" height="15" fill="#ff4a4a"/><rect x="262" y="819" width="1" height="22" fill="#ff4a4a"/><rect x="272" y="819" width="1" height="22" fill="#ff4a4a"/><rect x="283" y="806" width="1" height="35" fill="#ff4a4a"/><rect x="293" y="798" width="1" height="43" fill="#ff4a4a"/><rect x="303" y="792" width="1" height="49" fill="#ff4a4a"/><rect x="313" y="808" width="1" height="33" fill="#ff4a4a"/><rect x="324" y="824" width="1" height="17" fill="#ff4a4a"/><rect x="334" y="834" width="1" height="7" fill="#ff4a4a"/><rect x="344" y="841" width="1" height="2" fill="#00e5ee"/><rect x="354" y="841" width="1" height="8" fill="#00e5ee"/><rect x="365" y="841" width="1" height="12" fill="#00e5ee"/><rect x="375" y="841" width="1" height="14" fill="#00e5ee"/><rect x="385" y="841" width="1" height="15" fill="#00e5ee"/><rect x="396" y="841" width="1" height="17" fill="#00e5ee"/><rect x="406" y="841" width="1" height="18" fill="#00e5ee"/><rect x="416" y="841" width="1" height="18" fill="#00e5ee"/><rect x="426" y="841" width="1" height="17" fill="#00e5ee"/><rect x="437" y="841" width="1" height="16" fill="#00e5ee"/><rect x="447" y="841" width="1" height="15" fill="#00e5ee"/><rect x="457" y="841" width="1" height="13" fill="#00e5ee"/><rect x="467" y="841" width="1" height="14" fill="#00e5ee"/><rect x="478" y="841" width="1" height="16" fill="#00e5ee"/><rect x="488" y="841" width="1" height="16" fill="#00e5ee"/><rect x="498" y="841" width="1" height="14" fill="#00e5ee"/><rect x="508" y="841" width="1" height="10" fill="#00e5ee"/><rect x="519" y="841" width="1" height="5" fill="#00e5ee"/><rect x="529" y="841" width="1" height="3" fill="#00e5ee"/><rect x="560" y="841" width="1" height="2" fill="#00e5ee"/><rect x="570" y="841" width="1" height="3" fill="#00e5ee"/><rect x="580" y="841" width="1" height="2" fill="#00e5ee"/><rect x="591" y="841" width="1" height="5" fill="#00e5ee"/><rect x="601" y="841" width="1" height="6" fill="#00e5ee"/><rect x="611" y="841" width="1" height="6" fill="#00e5ee"/><rect x="621" y="841" width="1" height="5" fill="#00e5ee"/><rect x="632" y="841" width="1" height="3" fill="#00e5ee"/><rect x="642" y="841" width="1" height="1" fill="#00e5ee"/><rect x="652" y="840" width="1" height="1" fill="#ff4a4a"/><rect x="662" y="840" width="1" height="1" fill="#ff4a4a"/><rect x="673" y="839" width="1" height="2" fill="#ff4a4a"/><rect x="683" y="839" width="1" height="2" fill="#ff4a4a"/><rect x="704" y="840" width="1" height="1" fill="#ff4a4a"/><rect x="745" y="839" width="1" height="2" fill="#ff4a4a"/><rect x="755" y="838" width="1" height="3" fill="#ff4a4a"/><rect x="765" y="836" width="1" height="5" fill="#ff4a4a"/><rect x="775" y="838" width="1" height="3" fill="#ff4a4a"/><rect x="786" y="841" width="1" height="1" fill="#00e5ee"/><rect x="796" y="841" width="1" height="4" fill="#00e5ee"/><rect x="806" y="841" width="1" height="6" fill="#00e5ee"/><rect x="816" y="841" width="1" height="8" fill="#00e5ee"/><rect x="827" y="841" width="1" height="9" fill="#00e5ee"/><rect x="837" y="841" width="1" height="12" fill="#00e5ee"/><rect x="847" y="841" width="1" height="13" fill="#00e5ee"/><rect x="858" y="841" width="1" height="11" fill="#00e5ee"/><rect x="868" y="841" width="1" height="7" fill="#00e5ee"/><rect x="878" y="841" width="1" height="5" fill="#00e5ee"/><rect x="888" y="841" width="1" height="1" fill="#00e5ee"/><rect x="919" y="840" width="1" height="1" fill="#ff4a4a"/><rect x="929" y="840" width="1" height="1" fill="#ff4a4a"/><rect x="940" y="839" width="1" height="2" fill="#ff4a4a"/><rect x="970" y="841" width="1" height="2" fill="#00e5ee"/><rect x="981" y="841" width="1" height="3" fill="#00e5ee"/><rect x="991" y="841" width="1" height="2" fill="#00e5ee"/><rect x="1001" y="841" width="1" height="3" fill="#00e5ee"/><rect x="1012" y="841" width="1" height="2" fill="#00e5ee"/><rect x="1022" y="841" width="1" height="1" fill="#00e5ee"/><rect x="1032" y="841" width="1" height="2" fill="#00e5ee"/><rect x="1042" y="840" width="1" height="1" fill="#ff4a4a"/><rect x="1053" y="835" width="1" height="6" fill="#ff4a4a"/><rect x="1063" y="834" width="1" height="7" fill="#ff4a4a"/><rect x="1073" y="831" width="1" height="10" fill="#ff4a4a"/><rect x="1083" y="829" width="1" height="12" fill="#ff4a4a"/><rect x="1094" y="829" width="1" height="12" fill="#ff4a4a"/><rect x="1104" y="829" width="1" height="12" fill="#ff4a4a"/><rect x="1114" y="821" width="1" height="20" fill="#ff4a4a"/><rect x="1124" y="817" width="1" height="24" fill="#ff4a4a"/><rect x="1135" y="815" width="1" height="26" fill="#ff4a4a"/><rect x="1145" y="816" width="1" height="25" fill="#ff4a4a"/><rect x="1155" y="823" width="1" height="18" fill="#ff4a4a"/><rect x="1166" y="828" width="1" height="13" fill="#ff4a4a"/><rect x="1176" y="835" width="1" height="6" fill="#ff4a4a"/><rect x="1186" y="840" width="1" height="1" fill="#ff4a4a"/><rect x="1196" y="841" width="1" height="3" fill="#00e5ee"/><rect x="1207" y="841" width="1" height="6" fill="#00e5ee"/><rect x="1217" y="841" width="1" height="2" fill="#00e5ee"/><rect x="1227" y="841" width="1" height="3" fill="#00e5ee"/><rect x="1248" y="839" width="1" height="2" fill="#ff4a4a"/><rect x="1258" y="838" width="1" height="3" fill="#ff4a4a"/><rect x="1268" y="836" width="1" height="5" fill="#ff4a4a"/><rect x="1278" y="836" width="1" height="5" fill="#ff4a4a"/><rect x="1289" y="835" width="1" height="6" fill="#ff4a4a"/><rect x="1299" y="836" width="1" height="5" fill="#ff4a4a"/><rect x="1309" y="835" width="1" height="6" fill="#ff4a4a"/><rect x="1320" y="835" width="1" height="6" fill="#ff4a4a"/><rect x="1340" y="841" width="1" height="5" fill="#00e5ee"/><rect x="1350" y="841" width="1" height="10" fill="#00e5ee"/><rect x="1361" y="841" width="1" height="21" fill="#00e5ee"/><rect x="1371" y="841" width="1" height="28" fill="#00e5ee"/><rect x="1381" y="841" width="1" height="31" fill="#00e5ee"/><rect x="1391" y="841" width="1" height="32" fill="#00e5ee"/><rect x="1402" y="841" width="1" height="31" fill="#00e5ee"/><rect x="1412" y="841" width="1" height="27" fill="#00e5ee"/><rect x="1422" y="841" width="1" height="23" fill="#00e5ee"/><rect x="1432" y="841" width="1" height="18" fill="#00e5ee"/><rect x="1443" y="841" width="1" height="16" fill="#00e5ee"/><rect x="1453" y="841" width="1" height="13" fill="#00e5ee"/><rect x="1463" y="841" width="1" height="10" fill="#00e5ee"/><rect x="1474" y="841" width="1" height="8" fill="#00e5ee"/><rect x="1484" y="841" width="1" height="9" fill="#00e5ee"/><rect x="1494" y="841" width="1" height="10" fill="#00e5ee"/><rect x="1504" y="841" width="1" height="10" fill="#00e5ee"/><rect x="1515" y="841" width="1" height="10" fill="#00e5ee"/><rect x="1525" y="841" width="1" height="9" fill="#00e5ee"/><rect x="1535" y="841" width="1" height="10" fill="#00e5ee"/><rect x="1545" y="841" width="1" height="8" fill="#00e5ee"/><rect x="1556" y="841" width="1" height="6" fill="#00e5ee"/><rect x="1566" y="841" width="1" height="2" fill="#00e5ee"/><rect x="1576" y="840" width="1" height="1" fill="#ff4a4a"/><rect x="1586" y="838" width="1" height="3" fill="#ff4a4a"/><rect x="1597" y="836" width="1" height="5" fill="#ff4a4a"/><rect x="1607" y="834" width="1" height="7" fill="#ff4a4a"/><rect x="1617" y="833" width="1" height="8" fill="#ff4a4a"/><rect x="1628" y="832" width="1" height="9" fill="#ff4a4a"/><rect x="1638" y="833" width="1" height="8" fill="#ff4a4a"/><rect x="1648" y="833" width="1" height="8" fill="#ff4a4a"/><rect x="1658" y="830" width="1" height="11" fill="#ff4a4a"/><rect x="1669" y="827" width="1" height="14" fill="#ff4a4a"/><rect x="1679" y="824" width="1" height="17" fill="#ff4a4a"/><rect x="1689" y="823" width="1" height="18" fill="#ff4a4a"/><rect x="1699" y="821" width="1" height="20" fill="#ff4a4a"/><rect x="1710" y="822" width="1" height="19" fill="#ff4a4a"/><rect x="1720" y="821" width="1" height="20" fill="#ff4a4a"/><rect x="1730" y="821" width="1" height="20" fill="#ff4a4a"/><rect x="1740" y="823" width="1" height="18" fill="#ff4a4a"/><rect x="1751" y="828" width="1" height="13" fill="#ff4a4a"/><rect x="1761" y="831" width="1" height="10" fill="#ff4a4a"/><rect x="1771" y="827" width="1" height="14" fill="#ff4a4a"/><rect x="1782" y="823" width="1" height="18" fill="#ff4a4a"/><rect x="1792" y="808" width="1" height="33" fill="#ff4a4a"/><rect x="1802" y="803" width="1" height="38" fill="#ff4a4a"/></g>
<polyline points="57.5,830.8 67.6,829.4 98.1,830.1 118.5,831.3 139.1,832.9 159.8,834.1 180.6,833.6 200.8,832.9 231.8,832.5 241.6,830.8 252.4,828.5 262.5,826.1 272.3,823.1 283.3,818.4 293.4,813.2 303.8,807.8 313.8,803.6 324.4,801.3 334.5,800.1 344.8,800.1 354.9,801.3 365.4,803.1 375.5,805.0 385.8,807.1 395.9,809.0 406.5,810.9 416.6,813.2 426.9,816.0 437.4,818.4 447.5,820.3 457.6,822.6 467.9,824.2 478.5,826.1 488.6,828.5 498.9,830.1 509.2,831.3 529.6,832.5 560.4,833.6 581.0,834.3 591.3,834.8 601.6,836.0 611.7,836.7 632.4,838.3 642.7,838.3 652.8,838.3 673.4,837.6 734.8,837.6 745.2,837.1 765.8,836.4 776.1,836.0 786.2,836.4 796.5,837.1 806.8,837.9 817.2,838.8 827.2,839.5 837.6,841.8 847.9,843.5 858.2,844.9 868.3,845.4 878.6,846.5 888.9,846.5 899.2,846.5 919.6,846.1 930.0,846.1 971.0,847.2 1001.8,848.2 1032.7,848.9 1043.0,848.2 1053.1,847.2 1063.4,846.5 1073.8,844.9 1084.1,843.5 1094.2,842.3 1104.5,841.1 1114.8,838.8 1125.1,836.0 1135.2,832.5 1145.5,829.4 1155.8,827.1 1166.2,825.4 1176.5,824.2 1186.6,824.2 1196.9,825.4 1207.2,825.4 1217.5,826.6 1227.6,826.6 1237.9,826.1 1248.2,825.9 1258.6,825.0 1268.6,824.2 1279.0,823.5 1289.3,823.1 1299.6,822.6 1309.7,821.9 1320.0,821.4 1330.3,821.9 1340.6,822.6 1351.0,823.8 1361.1,826.1 1371.4,829.4 1381.7,834.8 1392.0,838.8 1402.1,842.5 1412.4,846.1 1422.8,848.9 1433.1,851.2 1443.2,853.6 1453.5,855.4 1474.1,858.3 1484.2,859.9 1494.5,861.3 1504.8,862.5 1515.2,863.6 1525.5,864.8 1535.6,866.0 1545.9,867.2 1556.2,868.1 1566.5,868.3 1576.6,868.1 1586.9,867.2 1597.3,866.0 1607.6,865.3 1617.7,864.1 1628.0,862.9 1638.3,862.2 1648.6,861.3 1658.9,859.9 1669.0,858.3 1679.3,856.4 1689.7,854.0 1700.0,851.9 1710.1,849.6 1720.4,847.2 1730.7,844.9 1741.0,842.5 1751.3,840.7 1761.4,838.8 1771.7,837.1 1782.1,834.8 1792.4,830.8 1802.5,825.4" fill="none" stroke="#ffff00" stroke-width="1" shape-rendering="crispEdges"/>
<polyline points="57.5,826.1 72.7,826.1 82.8,827.8 98.1,829.4 108.6,832.5 118.5,834.3 139.1,835.5 149.7,836.4 159.8,837.6 170.3,836.0 180.6,834.1 190.7,832.0 231.8,830.8 241.6,825.4 252.4,821.4 262.5,816.0 272.3,812.5 283.3,802.7 293.4,792.6 303.8,783.7 313.8,787.9 324.4,792.6 334.5,797.3 344.8,802.0 354.9,806.0 365.4,810.2 375.5,813.2 385.8,815.6 395.9,818.4 406.5,820.7 416.6,823.1 426.9,825.0 437.4,826.1 447.5,828.2 457.6,829.6 467.9,832.5 478.5,834.8 488.6,836.7 498.9,837.4 509.2,837.9 529.6,834.3 560.4,834.8 581.0,836.0 591.3,837.9 601.6,839.5 611.7,840.7 632.4,840.7 642.7,839.5 652.8,837.9 673.4,836.7 693.8,837.1 704.1,836.4 734.8,837.6 745.2,836.4 755.5,835.5 765.8,834.3 776.1,834.8 786.2,837.1 796.5,838.8 806.8,841.1 817.2,843.5 827.2,844.7 837.6,849.6 847.9,850.8 858.2,850.8 868.3,849.6 878.6,848.9 888.9,847.2 899.2,846.5 919.6,845.8 930.0,844.9 945.2,845.4 971.0,848.9 1001.8,848.9 1032.7,850.0 1043.0,847.7 1053.1,844.9 1063.4,843.0 1073.8,840.7 1084.1,838.8 1094.2,836.7 1104.5,835.5 1114.8,828.9 1125.1,824.2 1135.2,818.4 1145.5,816.5 1155.8,818.4 1166.2,818.4 1176.5,821.4 1186.6,824.2 1196.9,827.1 1207.2,829.4 1217.5,827.8 1227.6,828.2 1237.9,826.6 1248.2,825.4 1258.6,824.2 1268.6,822.6 1279.0,821.4 1289.3,821.2 1299.6,820.0 1309.7,819.1 1320.0,818.4 1330.3,821.9 1340.6,825.4 1351.0,830.1 1361.1,837.1 1371.4,843.0 1381.7,850.0 1392.0,855.2 1402.1,858.3 1412.4,860.6 1422.8,860.6 1433.1,861.3 1443.2,861.3 1453.5,862.2 1474.1,862.2 1484.2,864.1 1494.5,865.3 1504.8,866.9 1515.2,868.3 1525.5,869.5 1535.6,871.2 1545.9,871.2 1556.2,870.5 1566.5,869.3 1576.6,867.6 1586.9,866.0 1597.3,864.1 1607.6,862.2 1617.7,860.6 1628.0,859.4 1638.3,858.3 1648.6,857.1 1658.9,854.7 1669.0,851.9 1679.3,848.2 1689.7,844.9 1700.0,841.8 1710.1,840.2 1720.4,837.1 1730.7,834.1 1741.0,832.5 1751.3,833.6 1761.4,833.6 1771.7,831.3 1782.1,827.8 1792.4,814.9 1802.5,806.7" fill="none" stroke="#ffffff" stroke-width="1" shape-rendering="crispEdges"/></svg>
<div class="b" style="left:469px;top:410.5px;width:92px;height:24.5px;background:#080808;"></div>
<div class="b" style="left:1333px;top:404.5px;width:57.5px;height:25px;background:#080808;"></div>
<div class="b" style="left:1333px;top:434.5px;width:41px;height:25px;background:#080808;"></div>
<svg class="b" style="left:0;top:0;z-index:2" width="1919" height="1022" viewBox="0 0 1919 1022"><rect x="467.5" y="405.5" width="863" height="54" fill="none" stroke="#ff00ff" stroke-width="3" shape-rendering="crispEdges"/>
<polyline points="329.1,163.0 467.5,462.2 549.0,398.0 612.0,468.5 765.0,392.0 847.4,504.6 889.0,430.6 981.4,516.7 1114.4,315.4 1207.3,434.4 1309.7,302.1 1545.4,571.8 1802.8,219.8" fill="none" stroke="#ffff00" stroke-width="3.2" stroke-linejoin="miter" shape-rendering="crispEdges"/></svg>
<svg class="b" style="left:1321px;top:291px" width="16" height="10" fill="none" stroke="#c0c0c0" stroke-width="1.5"><path d="M0.5 5H15M5 1L0.5 5L5 9"/></svg>
<svg class="b" style="left:982px;top:513.5px" width="16" height="10" fill="none" stroke="#c0c0c0" stroke-width="1.5"><path d="M0.5 5H15M5 1L0.5 5L5 9"/></svg>
<svg class="b" style="left:1546px;top:568.5px" width="16" height="10" fill="none" stroke="#c0c0c0" stroke-width="1.5"><path d="M0.5 5H15M5 1L0.5 5L5 9"/></svg>
<svg class="b" style="left:121.5px;top:579.3px" width="21.5" height="10" fill="none" stroke="#fff" stroke-width="1.5"><path d="M0.5 5H20.5M5 1L0.5 5L5 9"/></svg>
<svg class="b" style="left:1171.5px;top:77px" width="9" height="14"><polygon points="4.5,0 9,4.5 6.2,4.5 6.2,9.5 9,9.5 4.5,14 0,9.5 2.8,9.5 2.8,4.5 0,4.5" fill="#c8c8c8"/></svg>
<svg class="b" style="left:1200px;top:77px" width="14" height="14" viewBox="-7 -7 14 14"><circle r="4.2" fill="#c8c8c8"/><g stroke="#c8c8c8" stroke-width="1.6"><line x1="-7" x2="7"/><line y1="-7" y2="7"/><line x1="-5" y1="-5" x2="5" y2="5"/><line x1="-5" y1="5" x2="5" y2="-5"/></g></svg>
<svg class="b" style="left:1436px;top:77px" width="14" height="14" viewBox="-7 -7 14 14"><circle r="4.2" fill="#c8c8c8"/><g stroke="#c8c8c8" stroke-width="1.6"><line x1="-7" x2="7"/><line y1="-7" y2="7"/><line x1="-5" y1="-5" x2="5" y2="5"/><line x1="-5" y1="5" x2="5" y2="-5"/></g></svg>
<svg class="b" style="left:1510.5px;top:77px" width="9" height="14"><polygon points="4.5,0 9,4.5 6.2,4.5 6.2,9.5 9,9.5 4.5,14 0,9.5 2.8,9.5 2.8,4.5 0,4.5" fill="#c8c8c8"/></svg>
<svg class="b" style="left:1643.5px;top:77px" width="9" height="14"><polygon points="4.5,0 9,4.5 6.2,4.5 6.2,9.5 9,9.5 4.5,14 0,9.5 2.8,9.5 2.8,4.5 0,4.5" fill="#c8c8c8"/></svg>
<svg class="b" style="left:443px;top:604px" width="10" height="5"><polygon points="5,0 10,5 0,5" fill="#ff0000"/></svg>
<div class="b" style="left:1818px;top:38px;width:1px;height:838px;background:#2a2a2a;"></div>
<div class="b" style="left:1906px;top:0px;width:1px;height:981px;background:#3a3a3a;"></div>
<div class="b" style="left:1907px;top:0px;width:10px;height:981px;background:#060606;"></div>
<div class="b" style="left:1917px;top:0px;width:2px;height:981px;background:#1c1c1c;"></div>
<div class="b" style="left:1907px;top:250px;width:12px;height:480px;background:linear-gradient(to bottom,rgba(70,70,70,0),rgba(70,70,70,.85) 50%,rgba(70,70,70,0));"></div>
<svg class="b" style="left:1908px;top:474px" width="8" height="32" viewBox="0 0 8 32"><polygon points="7,1 0.7,16 7,31" fill="#c4c4c4"/></svg>
<div class="b" style="left:52px;top:623px;width:1854px;height:1px;background:#262626;"></div>
<div class="b" style="left:52px;top:748px;width:1854px;height:1px;background:#262626;"></div>
<div class="b" style="left:52px;top:876px;width:1854px;height:1px;background:#333;"></div>
<div class="b" style="left:53px;top:630px;width:22px;height:22px;border:1px solid #555;box-sizing:border-box;border-radius:3px;"></div>
<div class="b" style="left:1794px;top:630px;width:23px;height:22px;border:1px solid #555;box-sizing:border-box;"></div>
<svg class="b" style="left:1800px;top:635px" width="12" height="12" stroke="#aaa" stroke-width="1.2"><line x1="0.5" y1="0.5" x2="11.5" y2="11.5"/><line x1="11.5" y1="0.5" x2="0.5" y2="11.5"/></svg>
<div class="b" style="left:53px;top:755px;width:22px;height:22px;border:1px solid #555;box-sizing:border-box;border-radius:3px;"></div>
<div class="b" style="left:1794px;top:755px;width:23px;height:22px;border:1px solid #555;box-sizing:border-box;"></div>
<svg class="b" style="left:1800px;top:760px" width="12" height="12" stroke="#aaa" stroke-width="1.2"><line x1="0.5" y1="0.5" x2="11.5" y2="11.5"/><line x1="11.5" y1="0.5" x2="0.5" y2="11.5"/></svg>
<svg class="b" style="left:343px;top:631.5px" width="10" height="20" fill="none" stroke="#fff" stroke-width="1.2"><path d="M5 0V20M0.5 7L5 0.5L9.5 7"/></svg>
<svg class="b" style="left:527px;top:631.5px" width="10" height="20" fill="none" stroke="#ffff00" stroke-width="1.2"><path d="M5 0V20M0.5 7L5 0.5L9.5 7"/></svg>
<svg class="b" style="left:726px;top:631.5px" width="10" height="20" fill="none" stroke="#ff00ff" stroke-width="1.2"><path d="M5 0V20M0.5 7L5 0.5L9.5 7"/></svg>
<svg class="b" style="left:321px;top:756.5px" width="10" height="20" fill="none" stroke="#fff" stroke-width="1.2"><path d="M5 0V20M0.5 7L5 0.5L9.5 7"/></svg>
<svg class="b" style="left:444px;top:756.5px" width="10" height="20" fill="none" stroke="#ffff00" stroke-width="1.2"><path d="M5 0V20M0.5 7L5 0.5L9.5 7"/></svg>
<svg class="b" style="left:577px;top:756.5px" width="10" height="20" fill="none" stroke="#ff00ff" stroke-width="1.2"><path d="M5 0V20M0.5 7L5 0.5L9.5 7"/></svg>
<div class="b" style="left:1819px;top:749px;width:88px;height:127px;border:1px solid #242424;box-sizing:border-box;"></div>
<div class="b" style="left:159px;top:876px;width:1px;height:4px;background:#444;"></div>
<div class="b" style="left:365px;top:876px;width:1px;height:4px;background:#444;"></div>
<div class="b" style="left:601px;top:876px;width:1px;height:4px;background:#444;"></div>
<div class="b" style="left:816px;top:876px;width:1px;height:4px;background:#444;"></div>
<div class="b" style="left:1042px;top:876px;width:1px;height:4px;background:#444;"></div>
<div class="b" style="left:1217px;top:876px;width:1px;height:4px;background:#444;"></div>
<div class="b" style="left:1422px;top:876px;width:1px;height:4px;background:#444;"></div>
<div class="b" style="left:1658px;top:876px;width:1px;height:4px;background:#444;"></div>
<div class="b" style="left:52.5px;top:879.5px;width:22px;height:22px;border:1px solid #555;box-sizing:border-box;border-radius:3px;"></div>
<svg class="b" style="left:53.5px;top:882px" width="20" height="18" fill="none" stroke="#c8c8c8" stroke-width="1.4"><path d="M10 3L4 9L10 15M16 3L10 9L16 15"/></svg>
<div class="b" style="left:1882.5px;top:879.5px;width:22px;height:22px;border:1px solid #555;box-sizing:border-box;border-radius:3px;"></div>
<svg class="b" style="left:1883.5px;top:882px" width="20" height="18" fill="none" stroke="#c8c8c8" stroke-width="1.4"><path d="M4 3L10 9L4 15M10 3L16 9L10 15"/></svg>
<div class="b" style="left:52px;top:904px;width:1854px;height:1px;background:#333;"></div>
<div class="b" style="left:57px;top:907.5px;width:56px;height:26px;background:#3a3a3a;border-radius:3px;"></div>
<div class="b" style="left:1706.5px;top:907.5px;width:55px;height:26px;border:1px solid #555;box-sizing:border-box;border-radius:2px;"></div>
<div class="b" style="left:1776.5px;top:907.5px;width:56px;height:26px;background:#3a3a3a;border-radius:3px;"></div>
<div class="b" style="left:52px;top:936px;width:1854px;height:1px;background:#333;"></div>
<div class="b" style="left:740px;top:937px;width:470px;height:10px;background:linear-gradient(to right,rgba(64,64,64,0),rgba(64,64,64,1) 50%,rgba(64,64,64,0));"></div>
<svg class="b" style="left:962px;top:940px" width="32" height="6"><polygon points="0,6 16,0 32,6" fill="#d0d0d0"/></svg>
<div class="b" style="left:51px;top:947px;width:1855px;height:35px;background:#1b1b1b;"></div>
<div class="b" style="left:51px;top:947px;width:1855px;height:1px;background:#3a3a3a;"></div>
<div class="b" style="left:0px;top:981px;width:1919px;height:1px;background:#3a3a3a;"></div>
<div class="b" style="left:51px;top:948px;width:81px;height:33px;background:#ea5504;"></div>
<div class="b" style="left:132px;top:948px;width:1px;height:33px;background:#3a3a3a;"></div>
<div class="b" style="left:214px;top:948px;width:1px;height:33px;background:#3a3a3a;"></div>
<div class="b" style="left:296px;top:948px;width:1px;height:33px;background:#3a3a3a;"></div>
<div class="b" style="left:378px;top:948px;width:1px;height:33px;background:#3a3a3a;"></div>
<div class="b" style="left:486px;top:948px;width:1px;height:33px;background:#3a3a3a;"></div>
<div class="b" style="left:594px;top:948px;width:1px;height:33px;background:#3a3a3a;"></div>
<div class="b" style="left:684px;top:948px;width:1px;height:33px;background:#3a3a3a;"></div>
<div class="b" style="left:792px;top:948px;width:1px;height:33px;background:#3a3a3a;"></div>
<div class="b" style="left:900px;top:948px;width:1px;height:33px;background:#3a3a3a;"></div>
<div class="b" style="left:1008px;top:948px;width:1px;height:33px;background:#3a3a3a;"></div>
<svg class="b" style="left:1874px;top:951px" width="25" height="25" fill="none" stroke="#a8a8a8" stroke-width="1.3"><path d="M1 8V1H24V8" stroke-dasharray="1.5 1.5"/><path d="M1 14V24H24V14H1"/><path d="M12.5 14V5M8.5 8.5L12.5 4.5L16.5 8.5" stroke="#c8c8c8" stroke-width="2"/></svg>
<div class="b" style="left:0px;top:982px;width:1919px;height:40px;background:#191919;"></div>
<svg class="b" style="left:4px;top:985px" width="34" height="34" viewBox="0 0 34 34"><circle cx="17" cy="17" r="16.2" fill="#ea5504"/><g fill="#fff"><path d="M21.5 4.5C15 6 8 9 4.9 12L5.3 17.6C10 16 17 11 22 6Z"/><path d="M22.4 6.2C20 11 15 15.5 10.6 18.5L13.3 24.7C18 21 22.5 14 23.8 7.5Z"/><path d="M24.3 8.5C24 15 21 21 17.7 24.7L21.7 29.5C25 24 27 16 25.8 10Z"/></g></svg>
<div class="b" style="left:55px;top:70px;width:1074px;height:94px;background:#000;"></div>
<div class="b" style="left:57px;top:71px;width:261px;height:36px;background:#333333;"></div>
<div class="b" style="left:57px;top:109px;width:261px;height:53px;background:#262626;"></div>
<div class="b" style="left:320px;top:71px;width:308px;height:36px;background:#333333;"></div>
<div class="b" style="left:320px;top:109px;width:308px;height:53px;background:#262626;"></div>
<div class="b" style="left:630px;top:71px;width:468px;height:36px;background:#333333;"></div>
<div class="b" style="left:630px;top:109px;width:468px;height:53px;background:#262626;"></div>
<div class="b" style="left:1100px;top:71px;width:28px;height:91px;background:#333333;"></div>
<div class="b" style="left:63px;top:105px;width:36px;height:2px;background:#ff6a00;"></div>
<svg class="b" style="left:1108px;top:83px" width="15" height="15" stroke="#8a8a8a" stroke-width="1.4"><line x1="0.5" y1="0.5" x2="14.5" y2="14.5"/><line x1="14.5" y1="0.5" x2="0.5" y2="14.5"/></svg>
<div class="b" style="left:66px;top:121px;width:30px;height:30px;border:1px solid #4a4a4a;box-sizing:border-box;"></div>
<svg class="b" style="left:66px;top:121px" width="30" height="30" viewBox="0 0 30 30" fill="none"><line x1="8" y1="22" x2="22" y2="8" stroke="#b0b0b0" stroke-width="1.15"/><circle cx="8" cy="22" r="1.7" fill="#b0b0b0"/><circle cx="22" cy="8" r="1.8" fill="#b0b0b0"/></svg>
<div class="b" style="left:108px;top:121px;width:30px;height:30px;border:1px solid #4a4a4a;box-sizing:border-box;"></div>
<svg class="b" style="left:108px;top:121px" width="30" height="30" viewBox="0 0 30 30" fill="none"><path d="M8 22L22 8M15.5 8H22V14.5" stroke="#b0b0b0" stroke-width="1.4"/><circle cx="8" cy="22" r="1.8" fill="#b0b0b0"/></svg>
<div class="b" style="left:150px;top:121px;width:30px;height:30px;border:1px solid #4a4a4a;box-sizing:border-box;"></div>
<svg class="b" style="left:150px;top:121px" width="30" height="30" viewBox="0 0 30 30" fill="none"><line x1="8" y1="22" x2="23" y2="7" stroke="#b0b0b0" stroke-width="1.15"/><circle cx="8" cy="22" r="1.7" fill="#b0b0b0"/></svg>
<div class="b" style="left:192px;top:121px;width:30px;height:30px;border:1px solid #4a4a4a;box-sizing:border-box;"></div>
<svg class="b" style="left:192px;top:121px" width="30" height="30" viewBox="0 0 30 30" fill="none"><line x1="7" y1="7" x2="23" y2="23" stroke="#b0b0b0" stroke-width="1.3"/></svg>
<div class="b" style="left:234px;top:121px;width:30px;height:30px;border:1px solid #4a4a4a;box-sizing:border-box;"></div>
<svg class="b" style="left:234px;top:121px" width="30" height="30" viewBox="0 0 30 30" fill="none"><line x1="4" y1="15" x2="26" y2="15" stroke="#b0b0b0" stroke-width="1.6"/></svg>
<div class="b" style="left:276px;top:121px;width:30px;height:30px;border:1px solid #4a4a4a;box-sizing:border-box;"></div>
<svg class="b" style="left:276px;top:121px" width="30" height="30" viewBox="0 0 30 30" fill="none"><path d="M7 15H23M15 7V23" stroke="#b0b0b0" stroke-width="2.4"/></svg>
<div class="b" style="left:385px;top:125px;width:23px;height:23px;background:#ffff00;border:1px solid #5a5a5a;box-sizing:border-box;"></div>
<div class="b" style="left:469px;top:121px;width:45px;height:30px;border:1px solid #4a4a4a;box-sizing:border-box;"></div>
<svg class="b" style="left:469px;top:121px" width="45" height="30"><rect x="3" y="12.5" width="18" height="3" fill="#8a8a8a"/><polygon points="28,11.5 39,11.5 33.5,18" fill="#9a9a9a"/></svg>
<div class="b" style="left:574px;top:121px;width:45px;height:30px;border:1px solid #4a4a4a;box-sizing:border-box;"></div>
<svg class="b" style="left:574px;top:121px" width="45" height="30"><rect x="3" y="14" width="17" height="2.5" fill="#9a9a9a"/><polygon points="28,11.5 39,11.5 33.5,18" fill="#9a9a9a"/></svg>
<div class="b" style="left:642px;top:121px;width:30px;height:30px;border:1px solid #8a8a8a;box-sizing:border-box;"></div>
<svg class="b" style="left:642px;top:121px" width="30" height="30" viewBox="0 0 30 30" fill="none"><path d="M11 6L11 23L15 19L18 25L20.5 24L17.5 18L22.5 18Z" stroke="#e0e08a" stroke-width="1.5" fill="none"/></svg>
<div class="b" style="left:684px;top:121px;width:30px;height:30px;border:1px solid #4a4a4a;box-sizing:border-box;"></div>
<svg class="b" style="left:684px;top:121px" width="30" height="30" viewBox="0 0 30 30" fill="none"><path d="M15 6L21 13H17V24H13V13H9Z" fill="#f05252"/></svg>
<div class="b" style="left:726px;top:121px;width:30px;height:30px;border:1px solid #4a4a4a;box-sizing:border-box;"></div>
<svg class="b" style="left:726px;top:121px" width="30" height="30" viewBox="0 0 30 30" fill="none"><path d="M15 24L21 17H17V6H13V17H9Z" fill="#3cb43c"/></svg>
<div class="b" style="left:768px;top:121px;width:30px;height:30px;border:1px solid #4a4a4a;box-sizing:border-box;"></div>
<svg class="b" style="left:768px;top:121px" width="30" height="30" viewBox="0 0 30 30" fill="none"><text x="3" y="16" font-family="Liberation Sans,sans-serif" font-size="12.5" fill="#b0b0b0" textLength="24">123</text><rect x="3" y="19" width="4" height="4" fill="#b0b0b0"/><line x1="5" y1="21" x2="27" y2="21" stroke="#b0b0b0" stroke-width="1.2"/></svg>
<div class="b" style="left:810px;top:121px;width:30px;height:30px;border:1px solid #4a4a4a;box-sizing:border-box;"></div>
<svg class="b" style="left:810px;top:121px" width="30" height="30" viewBox="0 0 30 30" fill="none"><text x="15" y="22" text-anchor="middle" font-family="Liberation Sans,sans-serif" font-size="20" fill="#b0b0b0">A</text></svg>
<div class="b" style="left:852px;top:121px;width:30px;height:30px;border:1px solid #4a4a4a;box-sizing:border-box;"></div>
<svg class="b" style="left:852px;top:121px" width="30" height="30" viewBox="0 0 30 30" fill="none"><g transform="rotate(-35 15 15)" stroke="#b0b0b0" stroke-width="1.2"><rect x="5" y="10.5" width="20" height="9"/><path d="M10 14v2M13 14v2M16 14v2M19 14v2"/></g></svg>
<div class="b" style="left:894px;top:121px;width:30px;height:30px;border:1px solid #4a4a4a;box-sizing:border-box;"></div>
<svg class="b" style="left:894px;top:121px" width="30" height="30" viewBox="0 0 30 30" fill="none"><path d="M5 19L12 11H25L18 19ZM5 19V22.5H18V19M18 22.5L25 14.5V11" stroke="#b0b0b0" stroke-width="1.3"/></svg>
<div class="b" style="left:936px;top:121px;width:30px;height:30px;border:1px solid #4a4a4a;box-sizing:border-box;"></div>
<svg class="b" style="left:936px;top:121px" width="30" height="30" viewBox="0 0 30 30" fill="none"><path d="M7 10H23M12 10V7H18V10M9 10V22.5Q9 24 10.5 24H19.5Q21 24 21 22.5V10M12.5 13.5V21M15 13.5V21M17.5 13.5V21" stroke="#b0b0b0" stroke-width="1.3"/></svg>
<div class="b" style="left:978px;top:121px;width:30px;height:30px;border:1px solid #4a4a4a;box-sizing:border-box;"></div>
<svg class="b" style="left:978px;top:121px" width="30" height="30" viewBox="0 0 30 30" fill="none"><g transform="translate(3,3)" stroke="#b0b0b0" stroke-width="1.3"><circle cx="12" cy="12" r="2.8"/><path d="M10.3 2.5h3.4l.6 2.6 1.6.9 2.5-.8 1.7 2.9-1.9 1.8v1.9l1.9 1.8-1.7 2.9-2.5-.8-1.6.9-.6 2.6h-3.4l-.6-2.6-1.6-.9-2.5.8-1.7-2.9 1.9-1.8v-1.9L3.9 8.1l1.7-2.9 2.5.8 1.6-.9z"/></g></svg>
<div class="b" style="left:1020px;top:121px;width:30px;height:30px;border:1px solid #4a4a4a;box-sizing:border-box;"></div>
<svg class="b" style="left:1020px;top:121px" width="30" height="30" viewBox="0 0 30 30" fill="none"><path d="M4 15Q15 4 26 15Q15 26 4 15Z" stroke="#b0b0b0" stroke-width="1.3"/><circle cx="15" cy="15" r="3.5" stroke="#b0b0b0" stroke-width="1.3"/><circle cx="15" cy="15" r="1.3" fill="#b0b0b0"/></svg>
<div class="b" style="left:1062px;top:121px;width:30px;height:30px;border:1px solid #8a8a8a;box-sizing:border-box;"></div>
<svg class="b" style="left:1062px;top:121px" width="30" height="30" viewBox="0 0 30 30" fill="none"><path d="M21 17V6H6V23H14" stroke="#e0e070" stroke-width="1.6"/><g stroke="#e0e070" stroke-width="1.2"><circle cx="17.5" cy="23" r="2"/><circle cx="23.5" cy="23" r="2"/><path d="M18.5 21.5L23.5 16M22.5 21.5L17.5 16"/></g></svg>
<div class="b" style="left:1041px;top:160px;width:60px;height:35px;background:#2a2a2a;border:1px solid #454545;box-sizing:border-box;"></div>
<svg class="b" style="left:1061px;top:151px" width="22" height="11"><polygon points="0,10.5 11,0.5 22,10.5" fill="#2a2a2a" stroke="#454545"/><rect x="1" y="10" width="20" height="1.5" fill="#2a2a2a"/></svg>
<div class="t" style="left:30.5px;top:14px;font-size:18px;line-height:23px;color:#9a9a9a;transform:translateX(-50%);">分</div>
<div class="t" style="left:30.5px;top:40px;font-size:18px;line-height:23px;color:#9a9a9a;transform:translateX(-50%);">时</div>
<div class="t" style="left:30.5px;top:66px;font-size:18px;line-height:23px;color:#9a9a9a;transform:translateX(-50%);">图</div>
<div class="t" style="left:30.5px;top:112.5px;font-size:18px;line-height:23px;color:#fff;transform:translateX(-50%);">K</div>
<div class="t" style="left:30.5px;top:139px;font-size:18px;line-height:23px;color:#fff;transform:translateX(-50%);">线</div>
<div class="t" style="left:30.5px;top:165.5px;font-size:18px;line-height:23px;color:#fff;transform:translateX(-50%);">图</div>
<div class="t" style="left:30.5px;top:211.2px;font-size:18px;line-height:23px;color:#9a9a9a;transform:translateX(-50%);">F10</div>
<div class="t" style="left:30.5px;top:237.5px;font-size:18px;line-height:23px;color:#9a9a9a;transform:translateX(-50%);">资</div>
<div class="t" style="left:30.5px;top:263.8px;font-size:18px;line-height:23px;color:#9a9a9a;transform:translateX(-50%);">料</div>
<div class="t" style="left:30.5px;top:310.2px;font-size:18px;line-height:23px;color:#9a9a9a;transform:translateX(-50%);">深</div>
<div class="t" style="left:30.5px;top:336.5px;font-size:18px;line-height:23px;color:#9a9a9a;transform:translateX(-50%);">度</div>
<div class="t" style="left:30.5px;top:362.8px;font-size:18px;line-height:23px;color:#9a9a9a;transform:translateX(-50%);">F9</div>
<div class="t" style="left:30.5px;top:402.05px;font-size:18px;line-height:23px;color:#9a9a9a;transform:translateX(-50%);">分</div>
<div class="t" style="left:30.5px;top:424.35px;font-size:18px;line-height:23px;color:#9a9a9a;transform:translateX(-50%);">时</div>
<div class="t" style="left:30.5px;top:446.65px;font-size:18px;line-height:23px;color:#9a9a9a;transform:translateX(-50%);">成</div>
<div class="t" style="left:30.5px;top:468.95px;font-size:18px;line-height:23px;color:#9a9a9a;transform:translateX(-50%);">交</div>
<div class="t" style="left:30.5px;top:508.2px;font-size:18px;line-height:23px;color:#9a9a9a;transform:translateX(-50%);">分</div>
<div class="t" style="left:30.5px;top:534.5px;font-size:18px;line-height:23px;color:#9a9a9a;transform:translateX(-50%);">价</div>
<div class="t" style="left:30.5px;top:560.8px;font-size:18px;line-height:23px;color:#9a9a9a;transform:translateX(-50%);">表</div>
<div class="t" style="left:30.5px;top:607.2px;font-size:18px;line-height:23px;color:#9a9a9a;transform:translateX(-50%);">多</div>
<div class="t" style="left:30.5px;top:633.5px;font-size:18px;line-height:23px;color:#9a9a9a;transform:translateX(-50%);">周</div>
<div class="t" style="left:30.5px;top:659.8px;font-size:18px;line-height:23px;color:#9a9a9a;transform:translateX(-50%);">期</div>
<div class="t" style="left:30.5px;top:717.25px;font-size:18px;line-height:23px;color:#9a9a9a;transform:translateX(-50%);">多</div>
<div class="t" style="left:30.5px;top:747.75px;font-size:18px;line-height:23px;color:#9a9a9a;transform:translateX(-50%);">股</div>
<div class="t" style="left:30.5px;top:816.75px;font-size:18px;line-height:23px;color:#9a9a9a;transform:translateX(-50%);">资</div>
<div class="t" style="left:30.5px;top:846.25px;font-size:18px;line-height:23px;color:#9a9a9a;transform:translateX(-50%);">金</div>
<div class="t" style="left:30.5px;top:904.2px;font-size:18px;line-height:23px;color:#9a9a9a;transform:translateX(-50%);">龙</div>
<div class="t" style="left:30.5px;top:930.5px;font-size:18px;line-height:23px;color:#9a9a9a;transform:translateX(-50%);">虎</div>
<div class="t" style="left:30.5px;top:956.8px;font-size:18px;line-height:23px;color:#9a9a9a;transform:translateX(-50%);">榜</div>
<div class="t" style="left:88.5px;top:9px;font-size:18px;line-height:23px;color:#b4b4b4;transform:translateX(-50%);">分时</div>
<div class="t" style="left:159.5px;top:9px;font-size:18px;line-height:23px;color:#b4b4b4;transform:translateX(-50%);">5日</div>
<div class="t" style="left:232px;top:9px;font-size:18px;line-height:23px;color:#b4b4b4;transform:translateX(-50%);">5分钟</div>
<div class="t" style="left:303.5px;top:9px;font-size:18px;line-height:23px;color:#b4b4b4;transform:translateX(-50%);">15分钟</div>
<div class="t" style="left:374.5px;top:9px;font-size:18px;line-height:23px;color:#b4b4b4;transform:translateX(-50%);">30分钟</div>
<div class="t" style="left:445.5px;top:9px;font-size:18px;line-height:23px;color:#b4b4b4;transform:translateX(-50%);">60分钟</div>
<div class="t" style="left:587.5px;top:9px;font-size:18px;line-height:23px;color:#b4b4b4;transform:translateX(-50%);">周线</div>
<div class="t" style="left:658.5px;top:9px;font-size:18px;line-height:23px;color:#b4b4b4;transform:translateX(-50%);">月线</div>
<div class="t" style="left:740px;top:9px;font-size:18px;line-height:23px;color:#b4b4b4;transform:translateX(-50%);">更多周期</div>
<div class="t" style="left:516.5px;top:9px;font-size:18px;line-height:23px;color:#ff6a00;transform:translateX(-50%);">日线</div>
<div class="t" style="left:1471px;top:9px;font-size:18px;line-height:23px;color:#d8d8d8;transform:translateX(-50%);">叠加</div>
<div class="t" style="left:1548.5px;top:9px;font-size:18px;line-height:23px;color:#d8d8d8;transform:translateX(-50%);">筹码</div>
<div class="t" style="left:1686px;top:9px;font-size:18px;line-height:23px;color:#d8d8d8;transform:translateX(-50%);">显示</div>
<div class="t" style="left:1763.5px;top:9px;font-size:18px;line-height:23px;color:#d8d8d8;transform:translateX(-50%);">简约</div>
<div class="t" style="left:1806px;top:9px;font-size:18px;line-height:23px;color:#d8d8d8;">展开</div>
<div class="t" style="left:1398px;top:9px;font-size:18px;line-height:23px;color:#ff6a00;transform:translateX(-50%);">复权</div>
<div class="t" style="left:1620px;top:9px;font-size:18px;line-height:23px;color:#ff6a00;transform:translateX(-50%);">画线</div>
<div class="t" style="left:60px;top:45px;font-size:18px;line-height:23px;color:#ffffa0;transform:scaleX(1.0000);transform-origin:0 50%;">蓝焰控股</div>
<div class="t" style="left:140.5px;top:45px;font-size:18px;line-height:23px;color:#9a9a9a;transform:scaleX(0.9813);transform-origin:0 50%;">(日线,前复权)</div>
<div class="t" style="left:262px;top:45.5px;font-size:17px;line-height:22px;color:#e0e0e0;transform:translateX(-50%);">?</div>
<div class="t" style="left:315.5px;top:45px;font-size:18px;line-height:23px;color:#8a8a8a;transform:scaleX(1.1111);transform-origin:0 50%;">MA</div>
<div class="t" style="left:354.5px;top:45px;font-size:18px;line-height:23px;color:#fff;transform:scaleX(1.0643);transform-origin:0 50%;">MA5:6.96</div>
<div class="t" style="left:462.5px;top:45px;font-size:18px;line-height:23px;color:#ffff00;transform:scaleX(1.0625);transform-origin:0 50%;">MA10:6.93</div>
<div class="t" style="left:581.7px;top:45px;font-size:18px;line-height:23px;color:#ff00ff;transform:scaleX(1.0625);transform-origin:0 50%;">MA20:6.98</div>
<div class="t" style="left:700px;top:45px;font-size:18px;line-height:23px;color:#00ff00;transform:scaleX(1.0567);transform-origin:0 50%;">MA30:7.01</div>
<div class="t" style="left:819px;top:45px;font-size:18px;line-height:23px;color:#d0d0d0;transform:scaleX(1.0682);transform-origin:0 50%;">MA60:7.09</div>
<div class="t" style="left:1552px;top:45px;font-size:18px;line-height:23px;color:#9a9a9a;transform:scaleX(1.0000);transform-origin:0 50%;">深股通</div>
<div class="t" style="left:1625.5px;top:45px;font-size:18px;line-height:23px;color:#9a9a9a;transform:scaleX(0.9931);transform-origin:0 50%;">融资融券</div>
<div class="t" style="left:1717.3px;top:45px;font-size:18px;line-height:23px;color:#9a9a9a;transform:scaleX(1.0000);transform-origin:0 50%;">设置均线</div>
<div class="t" style="left:473.3px;top:412px;font-size:18px;line-height:23px;color:#ff00ff;transform:scaleX(0.9996);transform-origin:0 50%;z-index:1;">K线数：85</div>
<div class="t" style="left:1336px;top:406px;font-size:18px;line-height:23px;color:#ff00ff;transform:scaleX(1.0383);transform-origin:0 50%;">4.17%</div>
<div class="t" style="left:1336px;top:435.5px;font-size:18px;line-height:23px;color:#ff00ff;transform:scaleX(1.0557);transform-origin:0 50%;">0.30</div>
<div class="t" style="left:1338.5px;top:284.5px;font-size:19px;line-height:25px;color:#c0c0c0;">7.84</div>
<div class="t" style="left:999.5px;top:507px;font-size:19px;line-height:25px;color:#c0c0c0;">6.72</div>
<div class="t" style="left:1563.5px;top:562px;font-size:19px;line-height:25px;color:#c0c0c0;">6.43</div>
<div class="t" style="left:144.5px;top:572.8px;font-size:19px;line-height:25px;color:#fff;">6.35</div>
<div class="t" style="left:1248.8px;top:160.9px;font-size:27px;line-height:35px;color:#ff1010;transform:scaleX(0.9947);transform-origin:0 50%;">1.25日蓝焰日线图复盘：</div>
<div class="t" style="left:1248.8px;top:196.8px;font-size:27px;line-height:35px;color:#ff1010;transform:scaleX(1.0000);transform-origin:0 50%;">破前低创新高。典型结构形态。</div>
<div class="t" style="left:1248.8px;top:233px;font-size:27px;line-height:35px;color:#ff1010;transform:scaleX(0.9925);transform-origin:0 50%;">应对：不破前高强三买。不破ZG三买。</div>
<div class="t" style="left:447.8px;top:605px;font-size:16px;line-height:21px;color:#ff0000;font-weight:700;transform:translateX(-50%);font-family:'Liberation Serif',serif;">S</div>
<div class="t" style="left:1897px;top:168px;font-size:18.5px;line-height:24px;color:#9a9a9a;transform:translateX(-100%);">8.50</div>
<div class="t" style="left:1897px;top:264px;font-size:18.5px;line-height:24px;color:#9a9a9a;transform:translateX(-100%);">8.00</div>
<div class="t" style="left:1897px;top:359px;font-size:18.5px;line-height:24px;color:#9a9a9a;transform:translateX(-100%);">7.50</div>
<div class="t" style="left:1897px;top:454px;font-size:18.5px;line-height:24px;color:#9a9a9a;transform:translateX(-100%);">7.00</div>
<div class="t" style="left:1897px;top:550px;font-size:18.5px;line-height:24px;color:#9a9a9a;transform:translateX(-100%);">6.50</div>
<div class="t" style="left:1897px;top:650px;font-size:18.5px;line-height:24px;color:#9a9a9a;transform:translateX(-100%);">98.00</div>
<div class="t" style="left:1897px;top:727px;font-size:18.5px;line-height:24px;color:#9a9a9a;transform:translateX(-100%);">0.00</div>
<div class="t" style="left:1897px;top:775px;font-size:18.5px;line-height:24px;color:#9a9a9a;transform:translateX(-100%);">0.38</div>
<div class="t" style="left:1897px;top:820px;font-size:18.5px;line-height:24px;color:#9a9a9a;transform:translateX(-100%);">0.08</div>
<div class="t" style="left:1897px;top:854px;font-size:18.5px;line-height:24px;color:#9a9a9a;transform:translateX(-100%);">-0.22</div>
<div class="t" style="left:64px;top:630.5px;font-size:17px;line-height:22px;color:#e0e0e0;transform:translateX(-50%);">?</div>
<div class="t" style="left:1590.7px;top:630px;font-size:18px;line-height:23px;color:#9a9a9a;transform:scaleX(1.0000);transform-origin:0 50%;">改参数</div>
<div class="t" style="left:1658px;top:630px;font-size:18px;line-height:23px;color:#9a9a9a;transform:scaleX(1.0000);transform-origin:0 50%;">加指标</div>
<div class="t" style="left:1726px;top:630px;font-size:18px;line-height:23px;color:#9a9a9a;transform:scaleX(1.0185);transform-origin:0 50%;">换指标</div>
<div class="t" style="left:64px;top:755.5px;font-size:17px;line-height:22px;color:#e0e0e0;transform:translateX(-50%);">?</div>
<div class="t" style="left:1590.7px;top:755px;font-size:18px;line-height:23px;color:#9a9a9a;transform:scaleX(1.0000);transform-origin:0 50%;">改参数</div>
<div class="t" style="left:1658px;top:755px;font-size:18px;line-height:23px;color:#9a9a9a;transform:scaleX(1.0000);transform-origin:0 50%;">加指标</div>
<div class="t" style="left:1726px;top:755px;font-size:18px;line-height:23px;color:#9a9a9a;transform:scaleX(1.0185);transform-origin:0 50%;">换指标</div>
<div class="t" style="left:87.5px;top:628.9px;font-size:18px;line-height:23px;color:#8a8a8a;transform:scaleX(0.9994);transform-origin:0 50%;">VOL(5,10)</div>
<div class="t" style="left:180px;top:628.9px;font-size:18px;line-height:23px;color:#fff;transform:scaleX(1.0190);transform-origin:0 50%;">VOLUME:20.688万</div>
<div class="t" style="left:363.5px;top:628.9px;font-size:18px;line-height:23px;color:#ffff00;transform:scaleX(1.0551);transform-origin:0 50%;">MAVOL1:10.100万</div>
<div class="t" style="left:547px;top:628.9px;font-size:18px;line-height:23px;color:#ff00ff;transform:scaleX(1.0755);transform-origin:0 50%;">MAVOL2:90402.600</div>
<div class="t" style="left:87.5px;top:753.9px;font-size:18px;line-height:23px;color:#8a8a8a;transform:scaleX(1.0476);transform-origin:0 50%;">MACD(12,26,9)</div>
<div class="t" style="left:227px;top:753.9px;font-size:18px;line-height:23px;color:#fff;transform:scaleX(1.0347);transform-origin:0 50%;">DIF:-0.029</div>
<div class="t" style="left:341.5px;top:753.9px;font-size:18px;line-height:23px;color:#ffff00;transform:scaleX(1.0316);transform-origin:0 50%;">DEA:-0.049</div>
<div class="t" style="left:463.5px;top:753.9px;font-size:18px;line-height:23px;color:#ff00ff;transform:scaleX(1.0481);transform-origin:0 50%;">MACD:0.041</div>
<div class="t" style="left:164.5px;top:882px;font-size:19px;line-height:25px;color:#9a9a9a;">06</div>
<div class="t" style="left:370.5px;top:882px;font-size:19px;line-height:25px;color:#9a9a9a;">07</div>
<div class="t" style="left:606.5px;top:882px;font-size:19px;line-height:25px;color:#9a9a9a;">08</div>
<div class="t" style="left:821.5px;top:882px;font-size:19px;line-height:25px;color:#9a9a9a;">09</div>
<div class="t" style="left:1047.5px;top:882px;font-size:19px;line-height:25px;color:#9a9a9a;">10</div>
<div class="t" style="left:1222.5px;top:882px;font-size:19px;line-height:25px;color:#9a9a9a;">11</div>
<div class="t" style="left:1427.5px;top:882px;font-size:19px;line-height:25px;color:#9a9a9a;">12</div>
<div class="t" style="left:1663.5px;top:882px;font-size:19px;line-height:25px;color:#fff;">2026</div>
<div class="t" style="left:85px;top:910.9px;font-size:18px;line-height:23px;color:#e6e6e6;transform:translateX(-50%);">指标</div>
<div class="t" style="left:127.5px;top:910.9px;font-size:18px;line-height:23px;color:#9a9a9a;transform:scaleX(0.9931);transform-origin:0 50%;">恢复默认</div>
<div class="t" style="left:228px;top:910.9px;font-size:18px;line-height:23px;color:#ffffa0;transform:scaleX(1.0000);transform-origin:0 50%;">成交量</div>
<div class="t" style="left:311px;top:910.9px;font-size:18px;line-height:23px;color:#ffffa0;transform:scaleX(1.0000);transform-origin:0 50%;">均线</div>
<div class="t" style="left:376px;top:910.9px;font-size:18px;line-height:23px;color:#9a9a9a;transform:scaleX(1.0000);transform-origin:0 50%;">资金博弈</div>
<div class="t" style="left:477.5px;top:910.9px;font-size:18px;line-height:23px;color:#9a9a9a;transform:scaleX(1.0000);transform-origin:0 50%;">资金趋势</div>
<div class="t" style="left:578px;top:910.9px;font-size:18px;line-height:23px;color:#9a9a9a;transform:scaleX(1.0000);transform-origin:0 50%;">两融差额</div>
<div class="t" style="left:679.5px;top:910.1px;font-size:18px;line-height:23px;color:#ffffa0;transform:scaleX(0.9717);transform-origin:0 50%;">MACD</div>
<div class="t" style="left:760px;top:910.1px;font-size:18px;line-height:23px;color:#9a9a9a;transform:scaleX(0.9701);transform-origin:0 50%;">KDJ</div>
<div class="t" style="left:823px;top:910.1px;font-size:18px;line-height:23px;color:#9a9a9a;transform:scaleX(0.9662);transform-origin:0 50%;">RSI</div>
<div class="t" style="left:881px;top:910.1px;font-size:18px;line-height:23px;color:#9a9a9a;transform:scaleX(0.9993);transform-origin:0 50%;">BOLL</div>
<div class="t" style="left:956px;top:910.1px;font-size:18px;line-height:23px;color:#9a9a9a;transform:scaleX(0.9667);transform-origin:0 50%;">WR</div>
<div class="t" style="left:1015px;top:910.1px;font-size:18px;line-height:23px;color:#9a9a9a;transform:scaleX(0.9733);transform-origin:0 50%;">OBV</div>
<div class="t" style="left:1081px;top:910.1px;font-size:18px;line-height:23px;color:#9a9a9a;transform:scaleX(0.9505);transform-origin:0 50%;">BIAS</div>
<div class="t" style="left:1149px;top:910.1px;font-size:18px;line-height:23px;color:#9a9a9a;transform:scaleX(0.9726);transform-origin:0 50%;">ENE</div>
<div class="t" style="left:1215px;top:910.1px;font-size:18px;line-height:23px;color:#9a9a9a;transform:scaleX(0.9797);transform-origin:0 50%;">BRAR</div>
<div class="t" style="left:1293px;top:910.1px;font-size:18px;line-height:23px;color:#9a9a9a;transform:scaleX(0.9677);transform-origin:0 50%;">CCI</div>
<div class="t" style="left:1352px;top:910.1px;font-size:18px;line-height:23px;color:#9a9a9a;transform:scaleX(0.9697);transform-origin:0 50%;">DMI</div>
<div class="t" style="left:1413px;top:910.1px;font-size:18px;line-height:23px;color:#9a9a9a;transform:scaleX(0.9726);transform-origin:0 50%;">DKX</div>
<div class="t" style="left:1478.75px;top:910.1px;font-size:18px;line-height:23px;color:#9a9a9a;transform:scaleX(0.9808);transform-origin:0 50%;">CR</div>
<div class="t" style="left:1533px;top:910.1px;font-size:18px;line-height:23px;color:#9a9a9a;transform:scaleX(0.9991);transform-origin:0 50%;">PSY</div>
<div class="t" style="left:1598px;top:910.1px;font-size:18px;line-height:23px;color:#9a9a9a;transform:scaleX(0.9994);transform-origin:0 50%;">KD</div>
<div class="t" style="left:1652px;top:910.1px;font-size:18px;line-height:23px;color:#9a9a9a;transform:scaleX(0.9750);transform-origin:0 50%;">DMA</div>
<div class="t" style="left:1734px;top:910.9px;font-size:18px;line-height:23px;color:#9a9a9a;transform:translateX(-50%);">更多</div>
<div class="t" style="left:1804.5px;top:910.9px;font-size:18px;line-height:23px;color:#e6e6e6;transform:translateX(-50%);">模板</div>
<div class="t" style="left:91.5px;top:955.3px;font-size:18px;line-height:23px;color:#fff;transform:translateX(-50%);">股吧</div>
<div class="t" style="left:173.25px;top:955.3px;font-size:18px;line-height:23px;color:#9a9a9a;transform:translateX(-50%);">大事</div>
<div class="t" style="left:255.25px;top:955.3px;font-size:18px;line-height:23px;color:#9a9a9a;transform:translateX(-50%);">资讯</div>
<div class="t" style="left:337px;top:955.3px;font-size:18px;line-height:23px;color:#9a9a9a;transform:translateX(-50%);">公告</div>
<div class="t" style="left:432px;top:955.3px;font-size:18px;line-height:23px;color:#9a9a9a;transform:translateX(-50%);">研究报告</div>
<div class="t" style="left:540.25px;top:955.3px;font-size:18px;line-height:23px;color:#9a9a9a;transform:translateX(-50%);">所属板块</div>
<div class="t" style="left:639.25px;top:955.3px;font-size:18px;line-height:23px;color:#9a9a9a;transform:translateX(-50%);">问董秘</div>
<div class="t" style="left:738.25px;top:955.3px;font-size:18px;line-height:23px;color:#9a9a9a;transform:translateX(-50%);">关联品种</div>
<div class="t" style="left:846.5px;top:955.3px;font-size:18px;line-height:23px;color:#9a9a9a;transform:translateX(-50%);">核心题材</div>
<div class="t" style="left:954.5px;top:955.3px;font-size:18px;line-height:23px;color:#9a9a9a;transform:translateX(-50%);">模拟交易</div>
<div class="t" style="left:44.3px;top:983.6px;font-size:28px;line-height:36px;color:#ea5504;font-weight:900;transform:scaleX(0.9865);transform-origin:0 50%;">东方财富</div>
<div class="t" style="left:1741.8px;top:991.5px;font-size:16px;line-height:21px;color:#f26200;font-weight:700;transform:scaleX(1.0049);transform-origin:0 50%;">权威 · 专业 · 及时 · 互动</div>
<div class="t" style="left:63.5px;top:79.7px;font-size:18px;line-height:23px;color:#ff6a00;transform:scaleX(1.0000);transform-origin:0 50%;">常用</div>
<div class="t" style="left:115.5px;top:79.7px;font-size:18px;line-height:23px;color:#9a9a9a;transform:scaleX(1.0000);transform-origin:0 50%;">趋势</div>
<div class="t" style="left:167.5px;top:79.7px;font-size:18px;line-height:23px;color:#9a9a9a;transform:scaleX(1.0000);transform-origin:0 50%;">时间</div>
<div class="t" style="left:219.5px;top:79.7px;font-size:18px;line-height:23px;color:#9a9a9a;transform:scaleX(1.0000);transform-origin:0 50%;">空间</div>
<div class="t" style="left:271.5px;top:79.7px;font-size:18px;line-height:23px;color:#9a9a9a;transform:scaleX(1.0000);transform-origin:0 50%;">时空</div>
<div class="t" style="left:456px;top:79.3px;font-size:18px;line-height:23px;color:#9a9a9a;transform:scaleX(1.0000);transform-origin:0 50%;">基本</div>
<div class="t" style="left:846.5px;top:79.3px;font-size:18px;line-height:23px;color:#9a9a9a;transform:scaleX(1.0000);transform-origin:0 50%;">工具</div>
<div class="t" style="left:335px;top:125.5px;font-size:18px;line-height:23px;color:#9a9a9a;transform:scaleX(0.9722);transform-origin:0 50%;">颜色</div>
<div class="t" style="left:420px;top:125.5px;font-size:18px;line-height:23px;color:#9a9a9a;transform:scaleX(1.0000);transform-origin:0 50%;">线型</div>
<div class="t" style="left:524.6px;top:125.5px;font-size:18px;line-height:23px;color:#9a9a9a;transform:scaleX(1.0000);transform-origin:0 50%;">粗细</div>
<div class="t" style="left:1071px;top:167px;font-size:18px;line-height:23px;color:#dcdcdc;transform:translateX(-50%);">截屏</div>
</div></body></html>
